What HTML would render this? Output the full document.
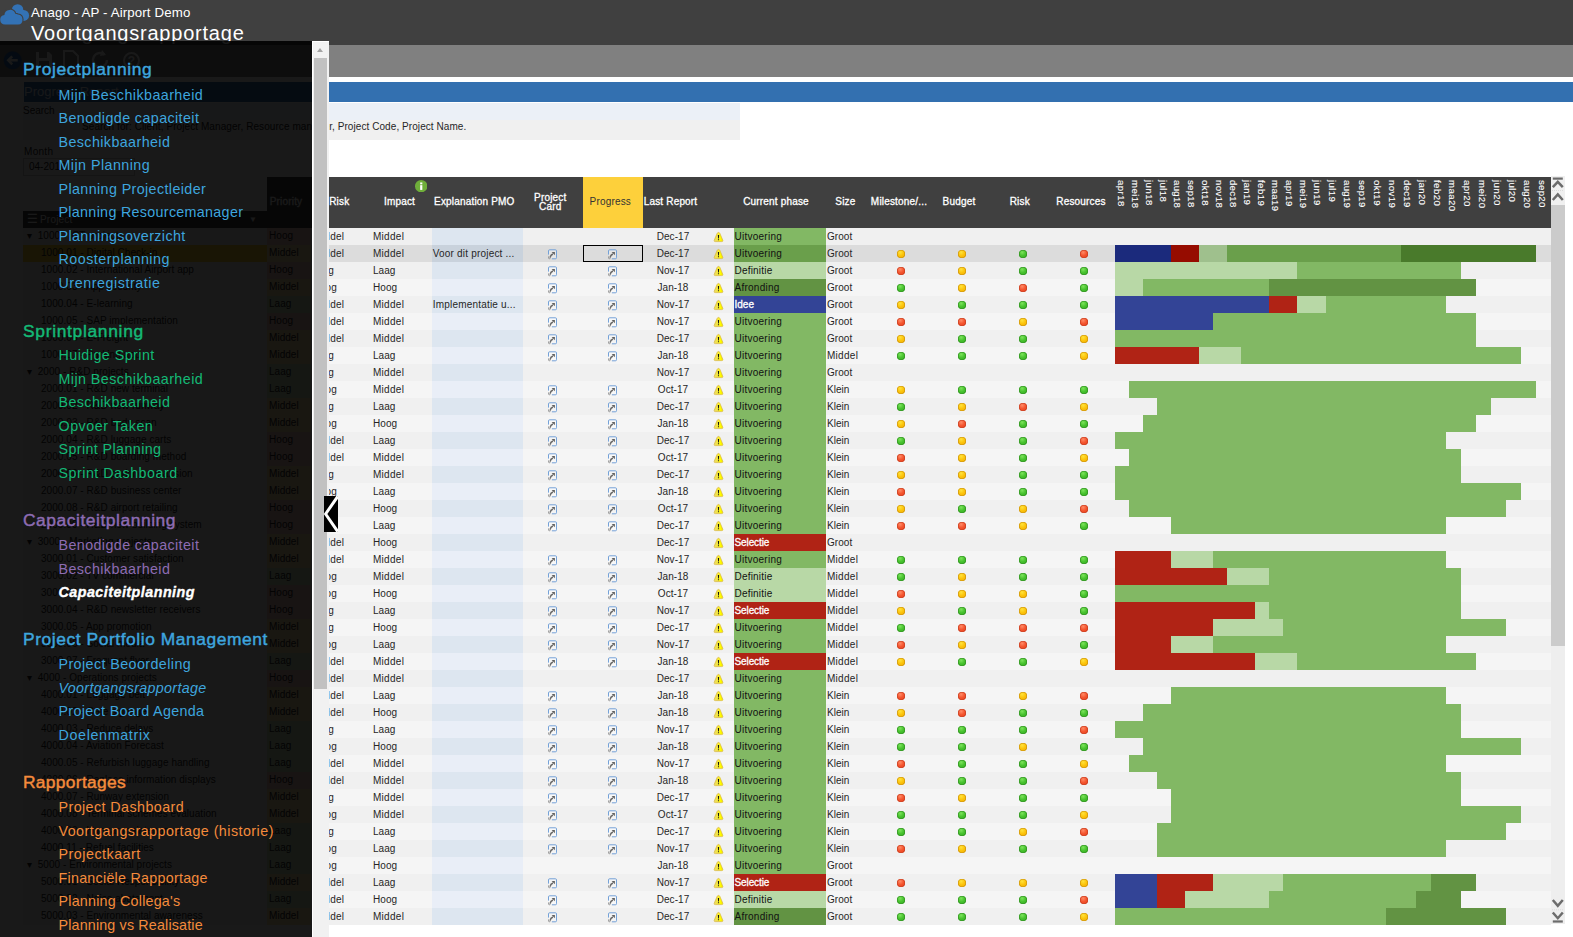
<!DOCTYPE html><html lang="nl"><head><meta charset="utf-8"><title>Voortgangsrapportage</title><style>
*{box-sizing:border-box;margin:0;padding:0}
svg{display:block}
html,body{width:1573px;height:937px;overflow:hidden;background:#fff}
body{font-family:"Liberation Sans", sans-serif;font-size:10px;color:#262626;position:relative}
.a{position:absolute}
#top{left:0;top:0;width:1573px;height:45px;background:#404040}
#t1{left:31px;top:4.6px;font-size:13.3px;color:#fff;white-space:nowrap;letter-spacing:.12px;line-height:16px}
#t2{left:31px;top:21px;font-size:20px;color:#fff;white-space:nowrap;letter-spacing:.78px;line-height:24px}
#tool{left:0;top:45px;width:1573px;height:32px;background:#808080}
#bluebar{left:24px;top:82px;width:1549px;height:20px;background:#3370b0}
#bluebar span{position:absolute;left:0;top:0;font-size:13px;line-height:20px;color:#e6eef7}
#srch1{left:23px;top:103px;width:717px;height:16.6px;background:#ebf0f7}
#srch2{left:23px;top:119.6px;width:717px;height:20.4px;background:#f0f0f0}
#srchlbl{left:23px;top:105px;line-height:12px}
#srchtxt{left:82px;top:120px;line-height:14px;white-space:nowrap;letter-spacing:.08px}
#srchtxt2{left:329.2px;top:120px;line-height:14px;white-space:nowrap;letter-spacing:.07px}
#monthlbl{left:24px;top:146px;line-height:12px;letter-spacing:.3px}
#monthinp{left:23px;top:158px;width:112px;height:18px;border:1px solid #ccc;background:#fff;line-height:15px;padding-left:5px}
#thead{left:267px;top:177px;width:1284px;height:51px;background:#404040}
#phead{left:23px;top:211px;width:244px;height:17px;background:#404040;color:#fff;line-height:17px}
.hl{position:absolute;color:#fff;font-size:10px;white-space:nowrap;transform:translateX(-50%);line-height:12px;top:196px;letter-spacing:.18px;-webkit-text-stroke:.3px #fff}
.mo{position:absolute;top:179.6px;font-size:9.6px;writing-mode:vertical-rl;color:#fff;white-space:nowrap;line-height:12px;letter-spacing:.25px;-webkit-text-stroke:.1px #fff}
.r{position:absolute;left:23px;width:1528px;height:17px;line-height:17px;white-space:nowrap}
.r.o{background:#f0f0f0}.r.e{background:#f5f5f5}.r.s{background:#dcdcdc}
.r>*{position:absolute;top:0;height:17px}
.c{letter-spacing:.05px}
.ex{left:409px;width:91px;padding-left:.7px;letter-spacing:.2px}
.o .ex{background:#dde6f0}.e .ex{background:#e9eef7}.s .ex{background:#c9d2dc}
.ph{left:711px;width:92px;padding-left:.5px}
.w{-webkit-text-stroke:.3px #fff}
.pn{left:0;width:244px;overflow:hidden;line-height:15px}
.pr{left:244px;width:44px;padding-left:2px;line-height:15px}
.lk{top:3.7px!important;width:10px;height:11px!important}
.lk svg{position:absolute;left:0;top:0}
.wn{left:690px;top:3.1px!important;width:11px;height:12px!important}
.d{top:4.6px!important;width:8.4px;height:8.4px!important;border-radius:50%}
.dY{background:radial-gradient(circle at 40% 30%,#ffe23a 0,#fcc40c 45%,#eea502 100%);box-shadow:inset 0 0 0 .6px #c98f05}
.dG{background:radial-gradient(circle at 40% 30%,#7be35a 0,#48c22f 45%,#2ea51d 100%);box-shadow:inset 0 0 0 .6px #2c8c1c}
.dR{background:radial-gradient(circle at 40% 30%,#ff8a66 0,#f4552f 45%,#e23a17 100%);box-shadow:inset 0 0 0 .6px #c23a1d}
.g{top:0}
#ovl{left:0;top:41px;width:312px;height:896px;background:rgba(0,0,0,.9)}
#sb{left:312px;top:41px;width:17px;height:896px;background:#f1f1f1;border-left:1.5px solid #fff;border-top:1px solid #fff}
#sbthumb{left:314px;top:58px;width:13px;height:631px;background:#c1c1c1}
#sbarrow{left:317px;top:48px;width:0;height:0;border-left:3.5px solid transparent;border-right:3.5px solid transparent;border-bottom:4px solid #a3a3a3}
.mh{position:absolute;left:23px;font-size:17.4px;white-space:nowrap;line-height:22px;-webkit-text-stroke:.45px currentColor}
.mi{position:absolute;left:58.5px;font-size:14.3px;white-space:nowrap;line-height:20px}
#clp{left:324px;top:496px;width:14px;height:36px;background:#000}
#rs{left:1551px;top:176px;width:14px;height:748px;background:#eee}
#rsthumb{left:1551px;top:205px;width:14px;height:441px;background:#cbcbcb}
#rstop{left:1551px;top:176px;width:14px;height:29px;background:#f0f0f0}
</style></head><body>
<div id="top" class="a"></div>
<svg class="a" style="left:0;top:0" width="31" height="27" viewBox="0 0 31 27"><g fill="#3372b5"><circle cx="17.6" cy="9.9" r="5.7"/><circle cx="23.6" cy="15.4" r="5.5"/><rect x="13" y="10" width="11" height="10"/></g><g fill="#3372b5" stroke="#404040" stroke-width="2.2"><path d="M5 24.6a4.8 4.8 0 0 1-.6-9.56 5.6 5.6 0 0 1 10.9-1.3 5.1 5.1 0 0 1 2.7 .76 5.1 5.1 0 0 1 .2 10.1z"/></g><path fill="#3372b5" d="M5 24.6a4.8 4.8 0 0 1-.6-9.56 5.6 5.6 0 0 1 10.9-1.3 5.1 5.1 0 0 1 2.7 .76 5.1 5.1 0 0 1 .2 10.1z"/></svg>
<div id="t1" class="a">Anago - AP - Airport Demo</div>
<div id="t2" class="a">Voortgangsrapportage</div>
<div id="tool" class="a"></div>
<svg class="a" style="left:3px;top:47px" width="150" height="28" viewBox="0 0 150 28"><circle cx="9.7" cy="13.3" r="9" fill="#2d6cb3"/><path d="M14.7 13.3H5.7m3.5-4-4 4 4 4" stroke="#fff" stroke-width="2.4" fill="none"/><path d="M33 5h13l3 3v14H33z" fill="#fff"/><rect x="36" y="5" width="8" height="6" fill="#808080"/><rect x="36" y="14" width="10" height="8" fill="#808080"/><path d="M61 4h9l5 5v14H61z" fill="none" stroke="#fff" stroke-width="2"/><path d="M104 13a7 7 0 1 1-2.5-5.4" fill="none" stroke="#fff" stroke-width="2.4"/><path d="M99 3l4 5-6 1z" fill="#fff"/><circle cx="128.5" cy="13.5" r="7.5" fill="none" stroke="#fff" stroke-width="2"/><text x="128.5" y="18" font-size="12" font-weight="bold" text-anchor="middle" fill="#fff">?</text></svg>
<div id="bluebar" class="a"><span>Progress Report</span></div>
<div id="srch1" class="a"></div><div id="srch2" class="a"></div>
<div id="srchlbl" class="a">Search</div>
<div id="srchtxt" class="a">Search for: Client, Project Manager, Resource manage</div><div id="srchtxt2" class="a">r, Project Code, Project Name.</div>
<div id="monthlbl" class="a">Month</div><div id="monthinp" class="a">04-2018</div>
<div id="thead" class="a"></div>
<div id="phead" class="a"><span style="position:absolute;left:4px;font-size:12px;line-height:16px">&#9776;</span><span style="position:absolute;left:17px;letter-spacing:.2px">Project</span><span style="position:absolute;left:226px;font-size:8px">&#9660;</span></div>
<div class="a" style="left:583px;top:177px;width:60px;height:51px;background:#fdd03b"></div>
<div class="hl" style="left:286px">Priority</div>
<div class="hl" style="left:339.3px">Risk</div>
<div class="hl" style="left:399.5px">Impact</div>
<div class="hl" style="left:474.3px">Explanation PMO</div>
<div class="hl" style="left:610.3px;color:#333;-webkit-text-stroke:0">Progress</div>
<div class="hl" style="left:670.5px">Last Report</div>
<div class="hl" style="left:776px">Current phase</div>
<div class="hl" style="left:845.4px">Size</div>
<div class="hl" style="left:899px">Milestone/...</div>
<div class="hl" style="left:959px">Budget</div>
<div class="hl" style="left:1019.8px">Risk</div>
<div class="hl" style="left:1081px">Resources</div>
<div class="hl" style="left:550.3px;top:193px;line-height:9px;text-align:center">Project<br>Card</div>
<svg class="a" style="left:415px;top:179.5px" width="12.4" height="12.4" viewBox="0 0 12 12"><circle cx="6" cy="6" r="6" fill="#6fae3a"/><rect x="5" y="5" width="2.1" height="4.6" fill="#fff"/><rect x="5" y="2.4" width="2.1" height="1.8" fill="#fff"/></svg>
<div class="mo" style="left:1114.5px;width:12px;letter-spacing:0.45px">apr18</div>
<div class="mo" style="left:1128.5px;width:12px;letter-spacing:0.46px">mei18</div>
<div class="mo" style="left:1142.5px;width:12px;letter-spacing:0.47px">jun18</div>
<div class="mo" style="left:1156.5px;width:12px;letter-spacing:0.41px">jul18</div>
<div class="mo" style="left:1170.5px;width:12px;letter-spacing:0.3px">aug18</div>
<div class="mo" style="left:1184.5px;width:12px;letter-spacing:0.28px">sep18</div>
<div class="mo" style="left:1198.5px;width:12px;letter-spacing:0.5px">okt18</div>
<div class="mo" style="left:1212.5px;width:12px;letter-spacing:0.42px">nov18</div>
<div class="mo" style="left:1226.5px;width:12px;letter-spacing:0.27px">dec18</div>
<div class="mo" style="left:1240.5px;width:12px;letter-spacing:0.36px">jan19</div>
<div class="mo" style="left:1254.5px;width:12px;letter-spacing:0.44px">feb19</div>
<div class="mo" style="left:1268.5px;width:12px;letter-spacing:0.41px">maa19</div>
<div class="mo" style="left:1282.5px;width:12px;letter-spacing:0.45px">apr19</div>
<div class="mo" style="left:1296.5px;width:12px;letter-spacing:0.46px">mei19</div>
<div class="mo" style="left:1311.0px;width:12px;letter-spacing:0.47px">jun19</div>
<div class="mo" style="left:1326.0px;width:12px;letter-spacing:0.41px">jul19</div>
<div class="mo" style="left:1341.0px;width:12px;letter-spacing:0.3px">aug19</div>
<div class="mo" style="left:1356.0px;width:12px;letter-spacing:0.28px">sep19</div>
<div class="mo" style="left:1371.0px;width:12px;letter-spacing:0.5px">okt19</div>
<div class="mo" style="left:1386.0px;width:12px;letter-spacing:0.42px">nov19</div>
<div class="mo" style="left:1401.0px;width:12px;letter-spacing:0.27px">dec19</div>
<div class="mo" style="left:1416.0px;width:12px;letter-spacing:0.36px">jan20</div>
<div class="mo" style="left:1431.0px;width:12px;letter-spacing:0.44px">feb20</div>
<div class="mo" style="left:1446.0px;width:12px;letter-spacing:0.41px">maa20</div>
<div class="mo" style="left:1461.0px;width:12px;letter-spacing:0.45px">apr20</div>
<div class="mo" style="left:1476.0px;width:12px;letter-spacing:0.46px">mei20</div>
<div class="mo" style="left:1491.0px;width:12px;letter-spacing:0.47px">jun20</div>
<div class="mo" style="left:1506.0px;width:12px;letter-spacing:0.41px">jul20</div>
<div class="mo" style="left:1521.0px;width:12px;letter-spacing:0.3px">aug20</div>
<div class="mo" style="left:1536.0px;width:12px;letter-spacing:0.28px">sep20</div>
<svg width="0" height="0" style="position:absolute"><linearGradient id="wg" x1="0" x2="1" y1="0" y2="0"><stop offset="0" stop-color="#e6d86a"/><stop offset=".45" stop-color="#f7e83a"/><stop offset=".7" stop-color="#ffff00"/><stop offset="1" stop-color="#f2e200"/></linearGradient></svg>
<div class="r o" style="top:228px">
<span class="pn c" style="padding-left:4px">&#9662;&nbsp; 1000 - ICT projects</span>
<span class="pr c" style="background:#f3c7c2">Hoog</span>
<span class="c" style="left:290.2px;letter-spacing:.28px">Middel</span>
<span class="c" style="left:350px;letter-spacing:.28px">Middel</span>
<span class="ex c"></span>
<span class="c" style="left:620px;width:60px;text-align:center">Dec-17</span>
<span class="wn"><svg width="11" height="12"><path d="M5.5 1.4C6.2 1.4 6.5 1.8 6.9 2.5L9.7 9C10.1 10 9.7 10.6 8.8 10.6H2.2C1.3 10.6 .9 10 1.3 9L4.1 2.5C4.5 1.8 4.8 1.4 5.5 1.4Z" fill="url(#wg)" stroke="#d8b541" stroke-width=".7"/><path d="M4.85 4h1.3l-.25 3.5h-.8z" fill="#10101c"/><rect x="4.9" y="8.1" width="1.2" height="1.2" rx=".4" fill="#3a3420"/></svg></span>
<span class="ph c" style="background:#82b864;color:#111;letter-spacing:0.25px">Uitvoering</span>
<span class="c" style="left:804px">Groot</span>
</div>
<div class="r s" style="top:245px">
<span class="pn c" style="background:#fdd03b;padding-left:18px">1000.01 - Digital Check-in</span>
<span class="pr c" style="background:#fbe3b0">Middel</span>
<span class="c" style="left:290.2px;letter-spacing:.28px">Middel</span>
<span class="c" style="left:350px;letter-spacing:.28px">Middel</span>
<span class="ex c">Voor dit project ...</span>
<span class="lk" style="left:525px"><svg width="10" height="11"><path d="M.5 5.6V1.9A1.1 1.1 0 0 1 1.6.8H7.4A1.1 1.1 0 0 1 8.5 1.9V8.7A1.1 1.1 0 0 1 7.4 9.8H3.9" fill="rgba(255,255,255,.3)" stroke="#6e9dd6" stroke-width=".95"/><path d="M2.1 8.6C2.3 6.7 3.3 5.6 5 5" stroke="#6a6a6a" stroke-width="1.4" fill="none"/><path d="M3.6 2.9h3.3v3.3z" fill="#606060"/><path d="M.5 7.4v1.7c0 .9 1.8 .9 1.8 0V8.3" stroke="#8e8e8e" stroke-width=".8" fill="none"/></svg></span><span class="lk" style="left:585px"><svg width="10" height="11"><path d="M.5 5.6V1.9A1.1 1.1 0 0 1 1.6.8H7.4A1.1 1.1 0 0 1 8.5 1.9V8.7A1.1 1.1 0 0 1 7.4 9.8H3.9" fill="rgba(255,255,255,.3)" stroke="#6e9dd6" stroke-width=".95"/><path d="M2.1 8.6C2.3 6.7 3.3 5.6 5 5" stroke="#6a6a6a" stroke-width="1.4" fill="none"/><path d="M3.6 2.9h3.3v3.3z" fill="#606060"/><path d="M.5 7.4v1.7c0 .9 1.8 .9 1.8 0V8.3" stroke="#8e8e8e" stroke-width=".8" fill="none"/></svg></span>
<span style="left:560px;width:60px;border:1px solid #000"></span>
<span class="c" style="left:620px;width:60px;text-align:center">Dec-17</span>
<span class="wn"><svg width="11" height="12"><path d="M5.5 1.4C6.2 1.4 6.5 1.8 6.9 2.5L9.7 9C10.1 10 9.7 10.6 8.8 10.6H2.2C1.3 10.6 .9 10 1.3 9L4.1 2.5C4.5 1.8 4.8 1.4 5.5 1.4Z" fill="url(#wg)" stroke="#d8b541" stroke-width=".7"/><path d="M4.85 4h1.3l-.25 3.5h-.8z" fill="#10101c"/><rect x="4.9" y="8.1" width="1.2" height="1.2" rx=".4" fill="#3a3420"/></svg></span>
<span class="ph c" style="background:#6a9f4b;color:#111;letter-spacing:0.25px">Uitvoering</span>
<span class="c" style="left:804px">Groot</span>
<span class="d dY" style="left:873.8px"></span>
<span class="d dY" style="left:934.8px"></span>
<span class="d dG" style="left:995.8px"></span>
<span class="d dR" style="left:1056.8px"></span>
<span class="g" style="left:1092px;width:56px;background:#1b2a7c"></span>
<span class="g" style="left:1148px;width:28px;background:#960c00"></span>
<span class="g" style="left:1176px;width:28px;background:#9fc08d"></span>
<span class="g" style="left:1204px;width:174px;background:#6a9f4b"></span>
<span class="g" style="left:1378px;width:135px;background:#497a2b"></span>
</div>
<div class="r o" style="top:262px">
<span class="pn c" style="padding-left:18px">1000.02 - International Airport app</span>
<span class="pr c" style="background:#f3c7c2">Hoog</span>
<span class="c" style="left:288.4px">Laag</span>
<span class="c" style="left:350px">Laag</span>
<span class="ex c"></span>
<span class="lk" style="left:525px"><svg width="10" height="11"><path d="M.5 5.6V1.9A1.1 1.1 0 0 1 1.6.8H7.4A1.1 1.1 0 0 1 8.5 1.9V8.7A1.1 1.1 0 0 1 7.4 9.8H3.9" fill="rgba(255,255,255,.3)" stroke="#6e9dd6" stroke-width=".95"/><path d="M2.1 8.6C2.3 6.7 3.3 5.6 5 5" stroke="#6a6a6a" stroke-width="1.4" fill="none"/><path d="M3.6 2.9h3.3v3.3z" fill="#606060"/><path d="M.5 7.4v1.7c0 .9 1.8 .9 1.8 0V8.3" stroke="#8e8e8e" stroke-width=".8" fill="none"/></svg></span><span class="lk" style="left:585px"><svg width="10" height="11"><path d="M.5 5.6V1.9A1.1 1.1 0 0 1 1.6.8H7.4A1.1 1.1 0 0 1 8.5 1.9V8.7A1.1 1.1 0 0 1 7.4 9.8H3.9" fill="rgba(255,255,255,.3)" stroke="#6e9dd6" stroke-width=".95"/><path d="M2.1 8.6C2.3 6.7 3.3 5.6 5 5" stroke="#6a6a6a" stroke-width="1.4" fill="none"/><path d="M3.6 2.9h3.3v3.3z" fill="#606060"/><path d="M.5 7.4v1.7c0 .9 1.8 .9 1.8 0V8.3" stroke="#8e8e8e" stroke-width=".8" fill="none"/></svg></span>
<span class="c" style="left:620px;width:60px;text-align:center">Nov-17</span>
<span class="wn"><svg width="11" height="12"><path d="M5.5 1.4C6.2 1.4 6.5 1.8 6.9 2.5L9.7 9C10.1 10 9.7 10.6 8.8 10.6H2.2C1.3 10.6 .9 10 1.3 9L4.1 2.5C4.5 1.8 4.8 1.4 5.5 1.4Z" fill="url(#wg)" stroke="#d8b541" stroke-width=".7"/><path d="M4.85 4h1.3l-.25 3.5h-.8z" fill="#10101c"/><rect x="4.9" y="8.1" width="1.2" height="1.2" rx=".4" fill="#3a3420"/></svg></span>
<span class="ph c" style="background:#b8d8a6;color:#111;letter-spacing:0.2px">Definitie</span>
<span class="c" style="left:804px">Groot</span>
<span class="d dR" style="left:873.8px"></span>
<span class="d dY" style="left:934.8px"></span>
<span class="d dG" style="left:995.8px"></span>
<span class="d dG" style="left:1056.8px"></span>
<span class="g" style="left:1092px;width:182px;background:#b8d8a6"></span>
<span class="g" style="left:1274px;width:164px;background:#82b864"></span>
</div>
<div class="r e" style="top:279px">
<span class="pn c" style="padding-left:18px">1000.03 - App security</span>
<span class="pr c" style="background:#fbe3b0">Middel</span>
<span class="c" style="left:289.7px">Hoog</span>
<span class="c" style="left:350px">Hoog</span>
<span class="ex c"></span>
<span class="lk" style="left:525px"><svg width="10" height="11"><path d="M.5 5.6V1.9A1.1 1.1 0 0 1 1.6.8H7.4A1.1 1.1 0 0 1 8.5 1.9V8.7A1.1 1.1 0 0 1 7.4 9.8H3.9" fill="rgba(255,255,255,.3)" stroke="#6e9dd6" stroke-width=".95"/><path d="M2.1 8.6C2.3 6.7 3.3 5.6 5 5" stroke="#6a6a6a" stroke-width="1.4" fill="none"/><path d="M3.6 2.9h3.3v3.3z" fill="#606060"/><path d="M.5 7.4v1.7c0 .9 1.8 .9 1.8 0V8.3" stroke="#8e8e8e" stroke-width=".8" fill="none"/></svg></span><span class="lk" style="left:585px"><svg width="10" height="11"><path d="M.5 5.6V1.9A1.1 1.1 0 0 1 1.6.8H7.4A1.1 1.1 0 0 1 8.5 1.9V8.7A1.1 1.1 0 0 1 7.4 9.8H3.9" fill="rgba(255,255,255,.3)" stroke="#6e9dd6" stroke-width=".95"/><path d="M2.1 8.6C2.3 6.7 3.3 5.6 5 5" stroke="#6a6a6a" stroke-width="1.4" fill="none"/><path d="M3.6 2.9h3.3v3.3z" fill="#606060"/><path d="M.5 7.4v1.7c0 .9 1.8 .9 1.8 0V8.3" stroke="#8e8e8e" stroke-width=".8" fill="none"/></svg></span>
<span class="c" style="left:620px;width:60px;text-align:center">Jan-18</span>
<span class="wn"><svg width="11" height="12"><path d="M5.5 1.4C6.2 1.4 6.5 1.8 6.9 2.5L9.7 9C10.1 10 9.7 10.6 8.8 10.6H2.2C1.3 10.6 .9 10 1.3 9L4.1 2.5C4.5 1.8 4.8 1.4 5.5 1.4Z" fill="url(#wg)" stroke="#d8b541" stroke-width=".7"/><path d="M4.85 4h1.3l-.25 3.5h-.8z" fill="#10101c"/><rect x="4.9" y="8.1" width="1.2" height="1.2" rx=".4" fill="#3a3420"/></svg></span>
<span class="ph c" style="background:#629343;color:#111;letter-spacing:0.25px">Afronding</span>
<span class="c" style="left:804px">Groot</span>
<span class="d dG" style="left:873.8px"></span>
<span class="d dY" style="left:934.8px"></span>
<span class="d dR" style="left:995.8px"></span>
<span class="d dG" style="left:1056.8px"></span>
<span class="g" style="left:1092px;width:28px;background:#b8d8a6"></span>
<span class="g" style="left:1120px;width:126px;background:#82b864"></span>
<span class="g" style="left:1246px;width:207px;background:#629343"></span>
</div>
<div class="r o" style="top:296px">
<span class="pn c" style="padding-left:18px">1000.04 - E-learning</span>
<span class="pr c" style="background:#cfe6c4">Laag</span>
<span class="c" style="left:290.2px;letter-spacing:.28px">Middel</span>
<span class="c" style="left:350px;letter-spacing:.28px">Middel</span>
<span class="ex c">Implementatie u...</span>
<span class="lk" style="left:525px"><svg width="10" height="11"><path d="M.5 5.6V1.9A1.1 1.1 0 0 1 1.6.8H7.4A1.1 1.1 0 0 1 8.5 1.9V8.7A1.1 1.1 0 0 1 7.4 9.8H3.9" fill="rgba(255,255,255,.3)" stroke="#6e9dd6" stroke-width=".95"/><path d="M2.1 8.6C2.3 6.7 3.3 5.6 5 5" stroke="#6a6a6a" stroke-width="1.4" fill="none"/><path d="M3.6 2.9h3.3v3.3z" fill="#606060"/><path d="M.5 7.4v1.7c0 .9 1.8 .9 1.8 0V8.3" stroke="#8e8e8e" stroke-width=".8" fill="none"/></svg></span><span class="lk" style="left:585px"><svg width="10" height="11"><path d="M.5 5.6V1.9A1.1 1.1 0 0 1 1.6.8H7.4A1.1 1.1 0 0 1 8.5 1.9V8.7A1.1 1.1 0 0 1 7.4 9.8H3.9" fill="rgba(255,255,255,.3)" stroke="#6e9dd6" stroke-width=".95"/><path d="M2.1 8.6C2.3 6.7 3.3 5.6 5 5" stroke="#6a6a6a" stroke-width="1.4" fill="none"/><path d="M3.6 2.9h3.3v3.3z" fill="#606060"/><path d="M.5 7.4v1.7c0 .9 1.8 .9 1.8 0V8.3" stroke="#8e8e8e" stroke-width=".8" fill="none"/></svg></span>
<span class="c" style="left:620px;width:60px;text-align:center">Nov-17</span>
<span class="wn"><svg width="11" height="12"><path d="M5.5 1.4C6.2 1.4 6.5 1.8 6.9 2.5L9.7 9C10.1 10 9.7 10.6 8.8 10.6H2.2C1.3 10.6 .9 10 1.3 9L4.1 2.5C4.5 1.8 4.8 1.4 5.5 1.4Z" fill="url(#wg)" stroke="#d8b541" stroke-width=".7"/><path d="M4.85 4h1.3l-.25 3.5h-.8z" fill="#10101c"/><rect x="4.9" y="8.1" width="1.2" height="1.2" rx=".4" fill="#3a3420"/></svg></span>
<span class="ph c w" style="background:#334496;color:#fff;letter-spacing:0px">Idee</span>
<span class="c" style="left:804px">Groot</span>
<span class="d dY" style="left:873.8px"></span>
<span class="d dG" style="left:934.8px"></span>
<span class="d dG" style="left:995.8px"></span>
<span class="d dG" style="left:1056.8px"></span>
<span class="g" style="left:1092px;width:154px;background:#334496"></span>
<span class="g" style="left:1246px;width:28px;background:#b02315"></span>
<span class="g" style="left:1274px;width:29px;background:#b8d8a6"></span>
<span class="g" style="left:1303px;width:120px;background:#82b864"></span>
</div>
<div class="r e" style="top:313px">
<span class="pn c" style="padding-left:18px">1000.05 - SAP implementation</span>
<span class="pr c" style="background:#f3c7c2">Hoog</span>
<span class="c" style="left:290.2px;letter-spacing:.28px">Middel</span>
<span class="c" style="left:350px;letter-spacing:.28px">Middel</span>
<span class="ex c"></span>
<span class="lk" style="left:525px"><svg width="10" height="11"><path d="M.5 5.6V1.9A1.1 1.1 0 0 1 1.6.8H7.4A1.1 1.1 0 0 1 8.5 1.9V8.7A1.1 1.1 0 0 1 7.4 9.8H3.9" fill="rgba(255,255,255,.3)" stroke="#6e9dd6" stroke-width=".95"/><path d="M2.1 8.6C2.3 6.7 3.3 5.6 5 5" stroke="#6a6a6a" stroke-width="1.4" fill="none"/><path d="M3.6 2.9h3.3v3.3z" fill="#606060"/><path d="M.5 7.4v1.7c0 .9 1.8 .9 1.8 0V8.3" stroke="#8e8e8e" stroke-width=".8" fill="none"/></svg></span><span class="lk" style="left:585px"><svg width="10" height="11"><path d="M.5 5.6V1.9A1.1 1.1 0 0 1 1.6.8H7.4A1.1 1.1 0 0 1 8.5 1.9V8.7A1.1 1.1 0 0 1 7.4 9.8H3.9" fill="rgba(255,255,255,.3)" stroke="#6e9dd6" stroke-width=".95"/><path d="M2.1 8.6C2.3 6.7 3.3 5.6 5 5" stroke="#6a6a6a" stroke-width="1.4" fill="none"/><path d="M3.6 2.9h3.3v3.3z" fill="#606060"/><path d="M.5 7.4v1.7c0 .9 1.8 .9 1.8 0V8.3" stroke="#8e8e8e" stroke-width=".8" fill="none"/></svg></span>
<span class="c" style="left:620px;width:60px;text-align:center">Nov-17</span>
<span class="wn"><svg width="11" height="12"><path d="M5.5 1.4C6.2 1.4 6.5 1.8 6.9 2.5L9.7 9C10.1 10 9.7 10.6 8.8 10.6H2.2C1.3 10.6 .9 10 1.3 9L4.1 2.5C4.5 1.8 4.8 1.4 5.5 1.4Z" fill="url(#wg)" stroke="#d8b541" stroke-width=".7"/><path d="M4.85 4h1.3l-.25 3.5h-.8z" fill="#10101c"/><rect x="4.9" y="8.1" width="1.2" height="1.2" rx=".4" fill="#3a3420"/></svg></span>
<span class="ph c" style="background:#82b864;color:#111;letter-spacing:0.25px">Uitvoering</span>
<span class="c" style="left:804px">Groot</span>
<span class="d dR" style="left:873.8px"></span>
<span class="d dR" style="left:934.8px"></span>
<span class="d dY" style="left:995.8px"></span>
<span class="d dR" style="left:1056.8px"></span>
<span class="g" style="left:1092px;width:98px;background:#334496"></span>
<span class="g" style="left:1190px;width:263px;background:#82b864"></span>
</div>
<div class="r o" style="top:330px">
<span class="pn c" style="padding-left:18px">1000.06 - E-Freight</span>
<span class="pr c" style="background:#fbe3b0">Middel</span>
<span class="c" style="left:290.2px;letter-spacing:.28px">Middel</span>
<span class="c" style="left:350px;letter-spacing:.28px">Middel</span>
<span class="ex c"></span>
<span class="lk" style="left:525px"><svg width="10" height="11"><path d="M.5 5.6V1.9A1.1 1.1 0 0 1 1.6.8H7.4A1.1 1.1 0 0 1 8.5 1.9V8.7A1.1 1.1 0 0 1 7.4 9.8H3.9" fill="rgba(255,255,255,.3)" stroke="#6e9dd6" stroke-width=".95"/><path d="M2.1 8.6C2.3 6.7 3.3 5.6 5 5" stroke="#6a6a6a" stroke-width="1.4" fill="none"/><path d="M3.6 2.9h3.3v3.3z" fill="#606060"/><path d="M.5 7.4v1.7c0 .9 1.8 .9 1.8 0V8.3" stroke="#8e8e8e" stroke-width=".8" fill="none"/></svg></span><span class="lk" style="left:585px"><svg width="10" height="11"><path d="M.5 5.6V1.9A1.1 1.1 0 0 1 1.6.8H7.4A1.1 1.1 0 0 1 8.5 1.9V8.7A1.1 1.1 0 0 1 7.4 9.8H3.9" fill="rgba(255,255,255,.3)" stroke="#6e9dd6" stroke-width=".95"/><path d="M2.1 8.6C2.3 6.7 3.3 5.6 5 5" stroke="#6a6a6a" stroke-width="1.4" fill="none"/><path d="M3.6 2.9h3.3v3.3z" fill="#606060"/><path d="M.5 7.4v1.7c0 .9 1.8 .9 1.8 0V8.3" stroke="#8e8e8e" stroke-width=".8" fill="none"/></svg></span>
<span class="c" style="left:620px;width:60px;text-align:center">Dec-17</span>
<span class="wn"><svg width="11" height="12"><path d="M5.5 1.4C6.2 1.4 6.5 1.8 6.9 2.5L9.7 9C10.1 10 9.7 10.6 8.8 10.6H2.2C1.3 10.6 .9 10 1.3 9L4.1 2.5C4.5 1.8 4.8 1.4 5.5 1.4Z" fill="url(#wg)" stroke="#d8b541" stroke-width=".7"/><path d="M4.85 4h1.3l-.25 3.5h-.8z" fill="#10101c"/><rect x="4.9" y="8.1" width="1.2" height="1.2" rx=".4" fill="#3a3420"/></svg></span>
<span class="ph c" style="background:#82b864;color:#111;letter-spacing:0.25px">Uitvoering</span>
<span class="c" style="left:804px">Groot</span>
<span class="d dY" style="left:873.8px"></span>
<span class="d dG" style="left:934.8px"></span>
<span class="d dG" style="left:995.8px"></span>
<span class="d dY" style="left:1056.8px"></span>
<span class="g" style="left:1092px;width:361px;background:#82b864"></span>
</div>
<div class="r e" style="top:347px">
<span class="pn c" style="padding-left:18px">1000.07 - Parking app</span>
<span class="pr c" style="background:#fbe3b0">Middel</span>
<span class="c" style="left:288.4px">Laag</span>
<span class="c" style="left:350px">Laag</span>
<span class="ex c"></span>
<span class="lk" style="left:525px"><svg width="10" height="11"><path d="M.5 5.6V1.9A1.1 1.1 0 0 1 1.6.8H7.4A1.1 1.1 0 0 1 8.5 1.9V8.7A1.1 1.1 0 0 1 7.4 9.8H3.9" fill="rgba(255,255,255,.3)" stroke="#6e9dd6" stroke-width=".95"/><path d="M2.1 8.6C2.3 6.7 3.3 5.6 5 5" stroke="#6a6a6a" stroke-width="1.4" fill="none"/><path d="M3.6 2.9h3.3v3.3z" fill="#606060"/><path d="M.5 7.4v1.7c0 .9 1.8 .9 1.8 0V8.3" stroke="#8e8e8e" stroke-width=".8" fill="none"/></svg></span><span class="lk" style="left:585px"><svg width="10" height="11"><path d="M.5 5.6V1.9A1.1 1.1 0 0 1 1.6.8H7.4A1.1 1.1 0 0 1 8.5 1.9V8.7A1.1 1.1 0 0 1 7.4 9.8H3.9" fill="rgba(255,255,255,.3)" stroke="#6e9dd6" stroke-width=".95"/><path d="M2.1 8.6C2.3 6.7 3.3 5.6 5 5" stroke="#6a6a6a" stroke-width="1.4" fill="none"/><path d="M3.6 2.9h3.3v3.3z" fill="#606060"/><path d="M.5 7.4v1.7c0 .9 1.8 .9 1.8 0V8.3" stroke="#8e8e8e" stroke-width=".8" fill="none"/></svg></span>
<span class="c" style="left:620px;width:60px;text-align:center">Jan-18</span>
<span class="wn"><svg width="11" height="12"><path d="M5.5 1.4C6.2 1.4 6.5 1.8 6.9 2.5L9.7 9C10.1 10 9.7 10.6 8.8 10.6H2.2C1.3 10.6 .9 10 1.3 9L4.1 2.5C4.5 1.8 4.8 1.4 5.5 1.4Z" fill="url(#wg)" stroke="#d8b541" stroke-width=".7"/><path d="M4.85 4h1.3l-.25 3.5h-.8z" fill="#10101c"/><rect x="4.9" y="8.1" width="1.2" height="1.2" rx=".4" fill="#3a3420"/></svg></span>
<span class="ph c" style="background:#82b864;color:#111;letter-spacing:0.25px">Uitvoering</span>
<span class="c" style="left:804px;letter-spacing:.28px">Middel</span>
<span class="d dG" style="left:873.8px"></span>
<span class="d dG" style="left:934.8px"></span>
<span class="d dG" style="left:995.8px"></span>
<span class="d dY" style="left:1056.8px"></span>
<span class="g" style="left:1092px;width:84px;background:#b02315"></span>
<span class="g" style="left:1176px;width:42px;background:#b8d8a6"></span>
<span class="g" style="left:1218px;width:280px;background:#82b864"></span>
</div>
<div class="r o" style="top:364px">
<span class="pn c" style="padding-left:4px">&#9662;&nbsp; 2000 - R&amp;D projects</span>
<span class="pr c" style="background:#cfe6c4">Laag</span>
<span class="c" style="left:288.4px">Laag</span>
<span class="c" style="left:350px;letter-spacing:.28px">Middel</span>
<span class="ex c"></span>
<span class="c" style="left:620px;width:60px;text-align:center">Nov-17</span>
<span class="wn"><svg width="11" height="12"><path d="M5.5 1.4C6.2 1.4 6.5 1.8 6.9 2.5L9.7 9C10.1 10 9.7 10.6 8.8 10.6H2.2C1.3 10.6 .9 10 1.3 9L4.1 2.5C4.5 1.8 4.8 1.4 5.5 1.4Z" fill="url(#wg)" stroke="#d8b541" stroke-width=".7"/><path d="M4.85 4h1.3l-.25 3.5h-.8z" fill="#10101c"/><rect x="4.9" y="8.1" width="1.2" height="1.2" rx=".4" fill="#3a3420"/></svg></span>
<span class="ph c" style="background:#82b864;color:#111;letter-spacing:0.25px">Uitvoering</span>
<span class="c" style="left:804px">Groot</span>
</div>
<div class="r e" style="top:381px">
<span class="pn c" style="padding-left:18px">2000.01 - R&amp;D new terminal</span>
<span class="pr c" style="background:#cfe6c4">Laag</span>
<span class="c" style="left:289.7px">Hoog</span>
<span class="c" style="left:350px;letter-spacing:.28px">Middel</span>
<span class="ex c"></span>
<span class="lk" style="left:525px"><svg width="10" height="11"><path d="M.5 5.6V1.9A1.1 1.1 0 0 1 1.6.8H7.4A1.1 1.1 0 0 1 8.5 1.9V8.7A1.1 1.1 0 0 1 7.4 9.8H3.9" fill="rgba(255,255,255,.3)" stroke="#6e9dd6" stroke-width=".95"/><path d="M2.1 8.6C2.3 6.7 3.3 5.6 5 5" stroke="#6a6a6a" stroke-width="1.4" fill="none"/><path d="M3.6 2.9h3.3v3.3z" fill="#606060"/><path d="M.5 7.4v1.7c0 .9 1.8 .9 1.8 0V8.3" stroke="#8e8e8e" stroke-width=".8" fill="none"/></svg></span><span class="lk" style="left:585px"><svg width="10" height="11"><path d="M.5 5.6V1.9A1.1 1.1 0 0 1 1.6.8H7.4A1.1 1.1 0 0 1 8.5 1.9V8.7A1.1 1.1 0 0 1 7.4 9.8H3.9" fill="rgba(255,255,255,.3)" stroke="#6e9dd6" stroke-width=".95"/><path d="M2.1 8.6C2.3 6.7 3.3 5.6 5 5" stroke="#6a6a6a" stroke-width="1.4" fill="none"/><path d="M3.6 2.9h3.3v3.3z" fill="#606060"/><path d="M.5 7.4v1.7c0 .9 1.8 .9 1.8 0V8.3" stroke="#8e8e8e" stroke-width=".8" fill="none"/></svg></span>
<span class="c" style="left:620px;width:60px;text-align:center">Oct-17</span>
<span class="wn"><svg width="11" height="12"><path d="M5.5 1.4C6.2 1.4 6.5 1.8 6.9 2.5L9.7 9C10.1 10 9.7 10.6 8.8 10.6H2.2C1.3 10.6 .9 10 1.3 9L4.1 2.5C4.5 1.8 4.8 1.4 5.5 1.4Z" fill="url(#wg)" stroke="#d8b541" stroke-width=".7"/><path d="M4.85 4h1.3l-.25 3.5h-.8z" fill="#10101c"/><rect x="4.9" y="8.1" width="1.2" height="1.2" rx=".4" fill="#3a3420"/></svg></span>
<span class="ph c" style="background:#82b864;color:#111;letter-spacing:0.25px">Uitvoering</span>
<span class="c" style="left:804px">Klein</span>
<span class="d dY" style="left:873.8px"></span>
<span class="d dG" style="left:934.8px"></span>
<span class="d dG" style="left:995.8px"></span>
<span class="d dG" style="left:1056.8px"></span>
<span class="g" style="left:1106px;width:407px;background:#82b864"></span>
</div>
<div class="r o" style="top:398px">
<span class="pn c" style="padding-left:18px">2000.02 - R&amp;D new runway</span>
<span class="pr c" style="background:#fbe3b0">Middel</span>
<span class="c" style="left:288.4px">Laag</span>
<span class="c" style="left:350px">Laag</span>
<span class="ex c"></span>
<span class="lk" style="left:525px"><svg width="10" height="11"><path d="M.5 5.6V1.9A1.1 1.1 0 0 1 1.6.8H7.4A1.1 1.1 0 0 1 8.5 1.9V8.7A1.1 1.1 0 0 1 7.4 9.8H3.9" fill="rgba(255,255,255,.3)" stroke="#6e9dd6" stroke-width=".95"/><path d="M2.1 8.6C2.3 6.7 3.3 5.6 5 5" stroke="#6a6a6a" stroke-width="1.4" fill="none"/><path d="M3.6 2.9h3.3v3.3z" fill="#606060"/><path d="M.5 7.4v1.7c0 .9 1.8 .9 1.8 0V8.3" stroke="#8e8e8e" stroke-width=".8" fill="none"/></svg></span><span class="lk" style="left:585px"><svg width="10" height="11"><path d="M.5 5.6V1.9A1.1 1.1 0 0 1 1.6.8H7.4A1.1 1.1 0 0 1 8.5 1.9V8.7A1.1 1.1 0 0 1 7.4 9.8H3.9" fill="rgba(255,255,255,.3)" stroke="#6e9dd6" stroke-width=".95"/><path d="M2.1 8.6C2.3 6.7 3.3 5.6 5 5" stroke="#6a6a6a" stroke-width="1.4" fill="none"/><path d="M3.6 2.9h3.3v3.3z" fill="#606060"/><path d="M.5 7.4v1.7c0 .9 1.8 .9 1.8 0V8.3" stroke="#8e8e8e" stroke-width=".8" fill="none"/></svg></span>
<span class="c" style="left:620px;width:60px;text-align:center">Dec-17</span>
<span class="wn"><svg width="11" height="12"><path d="M5.5 1.4C6.2 1.4 6.5 1.8 6.9 2.5L9.7 9C10.1 10 9.7 10.6 8.8 10.6H2.2C1.3 10.6 .9 10 1.3 9L4.1 2.5C4.5 1.8 4.8 1.4 5.5 1.4Z" fill="url(#wg)" stroke="#d8b541" stroke-width=".7"/><path d="M4.85 4h1.3l-.25 3.5h-.8z" fill="#10101c"/><rect x="4.9" y="8.1" width="1.2" height="1.2" rx=".4" fill="#3a3420"/></svg></span>
<span class="ph c" style="background:#82b864;color:#111;letter-spacing:0.25px">Uitvoering</span>
<span class="c" style="left:804px">Klein</span>
<span class="d dG" style="left:873.8px"></span>
<span class="d dY" style="left:934.8px"></span>
<span class="d dR" style="left:995.8px"></span>
<span class="d dY" style="left:1056.8px"></span>
<span class="g" style="left:1134px;width:334px;background:#82b864"></span>
</div>
<div class="r e" style="top:415px">
<span class="pn c" style="padding-left:18px">2000.03 - R&amp;D body scan</span>
<span class="pr c" style="background:#fbe3b0">Middel</span>
<span class="c" style="left:289.7px">Hoog</span>
<span class="c" style="left:350px">Hoog</span>
<span class="ex c"></span>
<span class="lk" style="left:525px"><svg width="10" height="11"><path d="M.5 5.6V1.9A1.1 1.1 0 0 1 1.6.8H7.4A1.1 1.1 0 0 1 8.5 1.9V8.7A1.1 1.1 0 0 1 7.4 9.8H3.9" fill="rgba(255,255,255,.3)" stroke="#6e9dd6" stroke-width=".95"/><path d="M2.1 8.6C2.3 6.7 3.3 5.6 5 5" stroke="#6a6a6a" stroke-width="1.4" fill="none"/><path d="M3.6 2.9h3.3v3.3z" fill="#606060"/><path d="M.5 7.4v1.7c0 .9 1.8 .9 1.8 0V8.3" stroke="#8e8e8e" stroke-width=".8" fill="none"/></svg></span><span class="lk" style="left:585px"><svg width="10" height="11"><path d="M.5 5.6V1.9A1.1 1.1 0 0 1 1.6.8H7.4A1.1 1.1 0 0 1 8.5 1.9V8.7A1.1 1.1 0 0 1 7.4 9.8H3.9" fill="rgba(255,255,255,.3)" stroke="#6e9dd6" stroke-width=".95"/><path d="M2.1 8.6C2.3 6.7 3.3 5.6 5 5" stroke="#6a6a6a" stroke-width="1.4" fill="none"/><path d="M3.6 2.9h3.3v3.3z" fill="#606060"/><path d="M.5 7.4v1.7c0 .9 1.8 .9 1.8 0V8.3" stroke="#8e8e8e" stroke-width=".8" fill="none"/></svg></span>
<span class="c" style="left:620px;width:60px;text-align:center">Jan-18</span>
<span class="wn"><svg width="11" height="12"><path d="M5.5 1.4C6.2 1.4 6.5 1.8 6.9 2.5L9.7 9C10.1 10 9.7 10.6 8.8 10.6H2.2C1.3 10.6 .9 10 1.3 9L4.1 2.5C4.5 1.8 4.8 1.4 5.5 1.4Z" fill="url(#wg)" stroke="#d8b541" stroke-width=".7"/><path d="M4.85 4h1.3l-.25 3.5h-.8z" fill="#10101c"/><rect x="4.9" y="8.1" width="1.2" height="1.2" rx=".4" fill="#3a3420"/></svg></span>
<span class="ph c" style="background:#82b864;color:#111;letter-spacing:0.25px">Uitvoering</span>
<span class="c" style="left:804px">Klein</span>
<span class="d dY" style="left:873.8px"></span>
<span class="d dR" style="left:934.8px"></span>
<span class="d dG" style="left:995.8px"></span>
<span class="d dG" style="left:1056.8px"></span>
<span class="g" style="left:1120px;width:333px;background:#82b864"></span>
</div>
<div class="r o" style="top:432px">
<span class="pn c" style="padding-left:18px">2000.04 - R&amp;D luggage carts</span>
<span class="pr c" style="background:#f3c7c2">Hoog</span>
<span class="c" style="left:290.2px;letter-spacing:.28px">Middel</span>
<span class="c" style="left:350px">Laag</span>
<span class="ex c"></span>
<span class="lk" style="left:525px"><svg width="10" height="11"><path d="M.5 5.6V1.9A1.1 1.1 0 0 1 1.6.8H7.4A1.1 1.1 0 0 1 8.5 1.9V8.7A1.1 1.1 0 0 1 7.4 9.8H3.9" fill="rgba(255,255,255,.3)" stroke="#6e9dd6" stroke-width=".95"/><path d="M2.1 8.6C2.3 6.7 3.3 5.6 5 5" stroke="#6a6a6a" stroke-width="1.4" fill="none"/><path d="M3.6 2.9h3.3v3.3z" fill="#606060"/><path d="M.5 7.4v1.7c0 .9 1.8 .9 1.8 0V8.3" stroke="#8e8e8e" stroke-width=".8" fill="none"/></svg></span><span class="lk" style="left:585px"><svg width="10" height="11"><path d="M.5 5.6V1.9A1.1 1.1 0 0 1 1.6.8H7.4A1.1 1.1 0 0 1 8.5 1.9V8.7A1.1 1.1 0 0 1 7.4 9.8H3.9" fill="rgba(255,255,255,.3)" stroke="#6e9dd6" stroke-width=".95"/><path d="M2.1 8.6C2.3 6.7 3.3 5.6 5 5" stroke="#6a6a6a" stroke-width="1.4" fill="none"/><path d="M3.6 2.9h3.3v3.3z" fill="#606060"/><path d="M.5 7.4v1.7c0 .9 1.8 .9 1.8 0V8.3" stroke="#8e8e8e" stroke-width=".8" fill="none"/></svg></span>
<span class="c" style="left:620px;width:60px;text-align:center">Dec-17</span>
<span class="wn"><svg width="11" height="12"><path d="M5.5 1.4C6.2 1.4 6.5 1.8 6.9 2.5L9.7 9C10.1 10 9.7 10.6 8.8 10.6H2.2C1.3 10.6 .9 10 1.3 9L4.1 2.5C4.5 1.8 4.8 1.4 5.5 1.4Z" fill="url(#wg)" stroke="#d8b541" stroke-width=".7"/><path d="M4.85 4h1.3l-.25 3.5h-.8z" fill="#10101c"/><rect x="4.9" y="8.1" width="1.2" height="1.2" rx=".4" fill="#3a3420"/></svg></span>
<span class="ph c" style="background:#82b864;color:#111;letter-spacing:0.25px">Uitvoering</span>
<span class="c" style="left:804px">Klein</span>
<span class="d dG" style="left:873.8px"></span>
<span class="d dY" style="left:934.8px"></span>
<span class="d dG" style="left:995.8px"></span>
<span class="d dR" style="left:1056.8px"></span>
<span class="g" style="left:1092px;width:331px;background:#82b864"></span>
</div>
<div class="r e" style="top:449px">
<span class="pn c" style="padding-left:18px">2000.05 - R&amp;D boarding method</span>
<span class="pr c" style="background:#f3c7c2">Hoog</span>
<span class="c" style="left:290.2px;letter-spacing:.28px">Middel</span>
<span class="c" style="left:350px;letter-spacing:.28px">Middel</span>
<span class="ex c"></span>
<span class="lk" style="left:525px"><svg width="10" height="11"><path d="M.5 5.6V1.9A1.1 1.1 0 0 1 1.6.8H7.4A1.1 1.1 0 0 1 8.5 1.9V8.7A1.1 1.1 0 0 1 7.4 9.8H3.9" fill="rgba(255,255,255,.3)" stroke="#6e9dd6" stroke-width=".95"/><path d="M2.1 8.6C2.3 6.7 3.3 5.6 5 5" stroke="#6a6a6a" stroke-width="1.4" fill="none"/><path d="M3.6 2.9h3.3v3.3z" fill="#606060"/><path d="M.5 7.4v1.7c0 .9 1.8 .9 1.8 0V8.3" stroke="#8e8e8e" stroke-width=".8" fill="none"/></svg></span><span class="lk" style="left:585px"><svg width="10" height="11"><path d="M.5 5.6V1.9A1.1 1.1 0 0 1 1.6.8H7.4A1.1 1.1 0 0 1 8.5 1.9V8.7A1.1 1.1 0 0 1 7.4 9.8H3.9" fill="rgba(255,255,255,.3)" stroke="#6e9dd6" stroke-width=".95"/><path d="M2.1 8.6C2.3 6.7 3.3 5.6 5 5" stroke="#6a6a6a" stroke-width="1.4" fill="none"/><path d="M3.6 2.9h3.3v3.3z" fill="#606060"/><path d="M.5 7.4v1.7c0 .9 1.8 .9 1.8 0V8.3" stroke="#8e8e8e" stroke-width=".8" fill="none"/></svg></span>
<span class="c" style="left:620px;width:60px;text-align:center">Oct-17</span>
<span class="wn"><svg width="11" height="12"><path d="M5.5 1.4C6.2 1.4 6.5 1.8 6.9 2.5L9.7 9C10.1 10 9.7 10.6 8.8 10.6H2.2C1.3 10.6 .9 10 1.3 9L4.1 2.5C4.5 1.8 4.8 1.4 5.5 1.4Z" fill="url(#wg)" stroke="#d8b541" stroke-width=".7"/><path d="M4.85 4h1.3l-.25 3.5h-.8z" fill="#10101c"/><rect x="4.9" y="8.1" width="1.2" height="1.2" rx=".4" fill="#3a3420"/></svg></span>
<span class="ph c" style="background:#82b864;color:#111;letter-spacing:0.25px">Uitvoering</span>
<span class="c" style="left:804px">Klein</span>
<span class="d dR" style="left:873.8px"></span>
<span class="d dY" style="left:934.8px"></span>
<span class="d dG" style="left:995.8px"></span>
<span class="d dY" style="left:1056.8px"></span>
<span class="g" style="left:1106px;width:332px;background:#82b864"></span>
</div>
<div class="r o" style="top:466px">
<span class="pn c" style="padding-left:18px">2000.06 - R&amp;D parking expansion</span>
<span class="pr c" style="background:#fbe3b0">Middel</span>
<span class="c" style="left:288.4px">Laag</span>
<span class="c" style="left:350px;letter-spacing:.28px">Middel</span>
<span class="ex c"></span>
<span class="lk" style="left:525px"><svg width="10" height="11"><path d="M.5 5.6V1.9A1.1 1.1 0 0 1 1.6.8H7.4A1.1 1.1 0 0 1 8.5 1.9V8.7A1.1 1.1 0 0 1 7.4 9.8H3.9" fill="rgba(255,255,255,.3)" stroke="#6e9dd6" stroke-width=".95"/><path d="M2.1 8.6C2.3 6.7 3.3 5.6 5 5" stroke="#6a6a6a" stroke-width="1.4" fill="none"/><path d="M3.6 2.9h3.3v3.3z" fill="#606060"/><path d="M.5 7.4v1.7c0 .9 1.8 .9 1.8 0V8.3" stroke="#8e8e8e" stroke-width=".8" fill="none"/></svg></span><span class="lk" style="left:585px"><svg width="10" height="11"><path d="M.5 5.6V1.9A1.1 1.1 0 0 1 1.6.8H7.4A1.1 1.1 0 0 1 8.5 1.9V8.7A1.1 1.1 0 0 1 7.4 9.8H3.9" fill="rgba(255,255,255,.3)" stroke="#6e9dd6" stroke-width=".95"/><path d="M2.1 8.6C2.3 6.7 3.3 5.6 5 5" stroke="#6a6a6a" stroke-width="1.4" fill="none"/><path d="M3.6 2.9h3.3v3.3z" fill="#606060"/><path d="M.5 7.4v1.7c0 .9 1.8 .9 1.8 0V8.3" stroke="#8e8e8e" stroke-width=".8" fill="none"/></svg></span>
<span class="c" style="left:620px;width:60px;text-align:center">Dec-17</span>
<span class="wn"><svg width="11" height="12"><path d="M5.5 1.4C6.2 1.4 6.5 1.8 6.9 2.5L9.7 9C10.1 10 9.7 10.6 8.8 10.6H2.2C1.3 10.6 .9 10 1.3 9L4.1 2.5C4.5 1.8 4.8 1.4 5.5 1.4Z" fill="url(#wg)" stroke="#d8b541" stroke-width=".7"/><path d="M4.85 4h1.3l-.25 3.5h-.8z" fill="#10101c"/><rect x="4.9" y="8.1" width="1.2" height="1.2" rx=".4" fill="#3a3420"/></svg></span>
<span class="ph c" style="background:#82b864;color:#111;letter-spacing:0.25px">Uitvoering</span>
<span class="c" style="left:804px">Klein</span>
<span class="d dY" style="left:873.8px"></span>
<span class="d dY" style="left:934.8px"></span>
<span class="d dG" style="left:995.8px"></span>
<span class="d dG" style="left:1056.8px"></span>
<span class="g" style="left:1092px;width:346px;background:#82b864"></span>
</div>
<div class="r e" style="top:483px">
<span class="pn c" style="padding-left:18px">2000.07 - R&amp;D business center</span>
<span class="pr c" style="background:#fbe3b0">Middel</span>
<span class="c" style="left:289.7px">Hoog</span>
<span class="c" style="left:350px">Laag</span>
<span class="ex c"></span>
<span class="lk" style="left:525px"><svg width="10" height="11"><path d="M.5 5.6V1.9A1.1 1.1 0 0 1 1.6.8H7.4A1.1 1.1 0 0 1 8.5 1.9V8.7A1.1 1.1 0 0 1 7.4 9.8H3.9" fill="rgba(255,255,255,.3)" stroke="#6e9dd6" stroke-width=".95"/><path d="M2.1 8.6C2.3 6.7 3.3 5.6 5 5" stroke="#6a6a6a" stroke-width="1.4" fill="none"/><path d="M3.6 2.9h3.3v3.3z" fill="#606060"/><path d="M.5 7.4v1.7c0 .9 1.8 .9 1.8 0V8.3" stroke="#8e8e8e" stroke-width=".8" fill="none"/></svg></span><span class="lk" style="left:585px"><svg width="10" height="11"><path d="M.5 5.6V1.9A1.1 1.1 0 0 1 1.6.8H7.4A1.1 1.1 0 0 1 8.5 1.9V8.7A1.1 1.1 0 0 1 7.4 9.8H3.9" fill="rgba(255,255,255,.3)" stroke="#6e9dd6" stroke-width=".95"/><path d="M2.1 8.6C2.3 6.7 3.3 5.6 5 5" stroke="#6a6a6a" stroke-width="1.4" fill="none"/><path d="M3.6 2.9h3.3v3.3z" fill="#606060"/><path d="M.5 7.4v1.7c0 .9 1.8 .9 1.8 0V8.3" stroke="#8e8e8e" stroke-width=".8" fill="none"/></svg></span>
<span class="c" style="left:620px;width:60px;text-align:center">Jan-18</span>
<span class="wn"><svg width="11" height="12"><path d="M5.5 1.4C6.2 1.4 6.5 1.8 6.9 2.5L9.7 9C10.1 10 9.7 10.6 8.8 10.6H2.2C1.3 10.6 .9 10 1.3 9L4.1 2.5C4.5 1.8 4.8 1.4 5.5 1.4Z" fill="url(#wg)" stroke="#d8b541" stroke-width=".7"/><path d="M4.85 4h1.3l-.25 3.5h-.8z" fill="#10101c"/><rect x="4.9" y="8.1" width="1.2" height="1.2" rx=".4" fill="#3a3420"/></svg></span>
<span class="ph c" style="background:#82b864;color:#111;letter-spacing:0.25px">Uitvoering</span>
<span class="c" style="left:804px">Klein</span>
<span class="d dR" style="left:873.8px"></span>
<span class="d dY" style="left:934.8px"></span>
<span class="d dG" style="left:995.8px"></span>
<span class="d dG" style="left:1056.8px"></span>
<span class="g" style="left:1092px;width:406px;background:#82b864"></span>
</div>
<div class="r o" style="top:500px">
<span class="pn c" style="padding-left:18px">2000.08 - R&amp;D airport retailing</span>
<span class="pr c" style="background:#f3c7c2">Hoog</span>
<span class="c" style="left:288.4px">Laag</span>
<span class="c" style="left:350px">Hoog</span>
<span class="ex c"></span>
<span class="lk" style="left:525px"><svg width="10" height="11"><path d="M.5 5.6V1.9A1.1 1.1 0 0 1 1.6.8H7.4A1.1 1.1 0 0 1 8.5 1.9V8.7A1.1 1.1 0 0 1 7.4 9.8H3.9" fill="rgba(255,255,255,.3)" stroke="#6e9dd6" stroke-width=".95"/><path d="M2.1 8.6C2.3 6.7 3.3 5.6 5 5" stroke="#6a6a6a" stroke-width="1.4" fill="none"/><path d="M3.6 2.9h3.3v3.3z" fill="#606060"/><path d="M.5 7.4v1.7c0 .9 1.8 .9 1.8 0V8.3" stroke="#8e8e8e" stroke-width=".8" fill="none"/></svg></span><span class="lk" style="left:585px"><svg width="10" height="11"><path d="M.5 5.6V1.9A1.1 1.1 0 0 1 1.6.8H7.4A1.1 1.1 0 0 1 8.5 1.9V8.7A1.1 1.1 0 0 1 7.4 9.8H3.9" fill="rgba(255,255,255,.3)" stroke="#6e9dd6" stroke-width=".95"/><path d="M2.1 8.6C2.3 6.7 3.3 5.6 5 5" stroke="#6a6a6a" stroke-width="1.4" fill="none"/><path d="M3.6 2.9h3.3v3.3z" fill="#606060"/><path d="M.5 7.4v1.7c0 .9 1.8 .9 1.8 0V8.3" stroke="#8e8e8e" stroke-width=".8" fill="none"/></svg></span>
<span class="c" style="left:620px;width:60px;text-align:center">Oct-17</span>
<span class="wn"><svg width="11" height="12"><path d="M5.5 1.4C6.2 1.4 6.5 1.8 6.9 2.5L9.7 9C10.1 10 9.7 10.6 8.8 10.6H2.2C1.3 10.6 .9 10 1.3 9L4.1 2.5C4.5 1.8 4.8 1.4 5.5 1.4Z" fill="url(#wg)" stroke="#d8b541" stroke-width=".7"/><path d="M4.85 4h1.3l-.25 3.5h-.8z" fill="#10101c"/><rect x="4.9" y="8.1" width="1.2" height="1.2" rx=".4" fill="#3a3420"/></svg></span>
<span class="ph c" style="background:#82b864;color:#111;letter-spacing:0.25px">Uitvoering</span>
<span class="c" style="left:804px">Klein</span>
<span class="d dY" style="left:873.8px"></span>
<span class="d dG" style="left:934.8px"></span>
<span class="d dY" style="left:995.8px"></span>
<span class="d dR" style="left:1056.8px"></span>
<span class="g" style="left:1106px;width:377px;background:#82b864"></span>
</div>
<div class="r e" style="top:517px">
<span class="pn c" style="padding-left:18px">2000.09 - R&amp;D new building system</span>
<span class="pr c" style="background:#f3c7c2">Hoog</span>
<span class="c" style="left:288.4px">Laag</span>
<span class="c" style="left:350px">Laag</span>
<span class="ex c"></span>
<span class="lk" style="left:525px"><svg width="10" height="11"><path d="M.5 5.6V1.9A1.1 1.1 0 0 1 1.6.8H7.4A1.1 1.1 0 0 1 8.5 1.9V8.7A1.1 1.1 0 0 1 7.4 9.8H3.9" fill="rgba(255,255,255,.3)" stroke="#6e9dd6" stroke-width=".95"/><path d="M2.1 8.6C2.3 6.7 3.3 5.6 5 5" stroke="#6a6a6a" stroke-width="1.4" fill="none"/><path d="M3.6 2.9h3.3v3.3z" fill="#606060"/><path d="M.5 7.4v1.7c0 .9 1.8 .9 1.8 0V8.3" stroke="#8e8e8e" stroke-width=".8" fill="none"/></svg></span><span class="lk" style="left:585px"><svg width="10" height="11"><path d="M.5 5.6V1.9A1.1 1.1 0 0 1 1.6.8H7.4A1.1 1.1 0 0 1 8.5 1.9V8.7A1.1 1.1 0 0 1 7.4 9.8H3.9" fill="rgba(255,255,255,.3)" stroke="#6e9dd6" stroke-width=".95"/><path d="M2.1 8.6C2.3 6.7 3.3 5.6 5 5" stroke="#6a6a6a" stroke-width="1.4" fill="none"/><path d="M3.6 2.9h3.3v3.3z" fill="#606060"/><path d="M.5 7.4v1.7c0 .9 1.8 .9 1.8 0V8.3" stroke="#8e8e8e" stroke-width=".8" fill="none"/></svg></span>
<span class="c" style="left:620px;width:60px;text-align:center">Dec-17</span>
<span class="wn"><svg width="11" height="12"><path d="M5.5 1.4C6.2 1.4 6.5 1.8 6.9 2.5L9.7 9C10.1 10 9.7 10.6 8.8 10.6H2.2C1.3 10.6 .9 10 1.3 9L4.1 2.5C4.5 1.8 4.8 1.4 5.5 1.4Z" fill="url(#wg)" stroke="#d8b541" stroke-width=".7"/><path d="M4.85 4h1.3l-.25 3.5h-.8z" fill="#10101c"/><rect x="4.9" y="8.1" width="1.2" height="1.2" rx=".4" fill="#3a3420"/></svg></span>
<span class="ph c" style="background:#82b864;color:#111;letter-spacing:0.25px">Uitvoering</span>
<span class="c" style="left:804px">Klein</span>
<span class="d dR" style="left:873.8px"></span>
<span class="d dR" style="left:934.8px"></span>
<span class="d dY" style="left:995.8px"></span>
<span class="d dG" style="left:1056.8px"></span>
<span class="g" style="left:1148px;width:275px;background:#82b864"></span>
</div>
<div class="r o" style="top:534px">
<span class="pn c" style="padding-left:4px">&#9662;&nbsp; 3000 - Marketing projects</span>
<span class="pr c" style="background:#fbe3b0">Middel</span>
<span class="c" style="left:290.2px;letter-spacing:.28px">Middel</span>
<span class="c" style="left:350px">Hoog</span>
<span class="ex c"></span>
<span class="c" style="left:620px;width:60px;text-align:center">Dec-17</span>
<span class="wn"><svg width="11" height="12"><path d="M5.5 1.4C6.2 1.4 6.5 1.8 6.9 2.5L9.7 9C10.1 10 9.7 10.6 8.8 10.6H2.2C1.3 10.6 .9 10 1.3 9L4.1 2.5C4.5 1.8 4.8 1.4 5.5 1.4Z" fill="url(#wg)" stroke="#d8b541" stroke-width=".7"/><path d="M4.85 4h1.3l-.25 3.5h-.8z" fill="#10101c"/><rect x="4.9" y="8.1" width="1.2" height="1.2" rx=".4" fill="#3a3420"/></svg></span>
<span class="ph c w" style="background:#b02315;color:#fff;letter-spacing:-0.1px">Selectie</span>
<span class="c" style="left:804px">Groot</span>
</div>
<div class="r e" style="top:551px">
<span class="pn c" style="padding-left:18px">3000.01 - Customer satisfaction</span>
<span class="pr c" style="background:#fbe3b0">Middel</span>
<span class="c" style="left:290.2px;letter-spacing:.28px">Middel</span>
<span class="c" style="left:350px;letter-spacing:.28px">Middel</span>
<span class="ex c"></span>
<span class="lk" style="left:525px"><svg width="10" height="11"><path d="M.5 5.6V1.9A1.1 1.1 0 0 1 1.6.8H7.4A1.1 1.1 0 0 1 8.5 1.9V8.7A1.1 1.1 0 0 1 7.4 9.8H3.9" fill="rgba(255,255,255,.3)" stroke="#6e9dd6" stroke-width=".95"/><path d="M2.1 8.6C2.3 6.7 3.3 5.6 5 5" stroke="#6a6a6a" stroke-width="1.4" fill="none"/><path d="M3.6 2.9h3.3v3.3z" fill="#606060"/><path d="M.5 7.4v1.7c0 .9 1.8 .9 1.8 0V8.3" stroke="#8e8e8e" stroke-width=".8" fill="none"/></svg></span><span class="lk" style="left:585px"><svg width="10" height="11"><path d="M.5 5.6V1.9A1.1 1.1 0 0 1 1.6.8H7.4A1.1 1.1 0 0 1 8.5 1.9V8.7A1.1 1.1 0 0 1 7.4 9.8H3.9" fill="rgba(255,255,255,.3)" stroke="#6e9dd6" stroke-width=".95"/><path d="M2.1 8.6C2.3 6.7 3.3 5.6 5 5" stroke="#6a6a6a" stroke-width="1.4" fill="none"/><path d="M3.6 2.9h3.3v3.3z" fill="#606060"/><path d="M.5 7.4v1.7c0 .9 1.8 .9 1.8 0V8.3" stroke="#8e8e8e" stroke-width=".8" fill="none"/></svg></span>
<span class="c" style="left:620px;width:60px;text-align:center">Nov-17</span>
<span class="wn"><svg width="11" height="12"><path d="M5.5 1.4C6.2 1.4 6.5 1.8 6.9 2.5L9.7 9C10.1 10 9.7 10.6 8.8 10.6H2.2C1.3 10.6 .9 10 1.3 9L4.1 2.5C4.5 1.8 4.8 1.4 5.5 1.4Z" fill="url(#wg)" stroke="#d8b541" stroke-width=".7"/><path d="M4.85 4h1.3l-.25 3.5h-.8z" fill="#10101c"/><rect x="4.9" y="8.1" width="1.2" height="1.2" rx=".4" fill="#3a3420"/></svg></span>
<span class="ph c" style="background:#82b864;color:#111;letter-spacing:0.25px">Uitvoering</span>
<span class="c" style="left:804px;letter-spacing:.28px">Middel</span>
<span class="d dG" style="left:873.8px"></span>
<span class="d dG" style="left:934.8px"></span>
<span class="d dG" style="left:995.8px"></span>
<span class="d dG" style="left:1056.8px"></span>
<span class="g" style="left:1092px;width:56px;background:#b02315"></span>
<span class="g" style="left:1148px;width:42px;background:#b8d8a6"></span>
<span class="g" style="left:1190px;width:233px;background:#82b864"></span>
</div>
<div class="r o" style="top:568px">
<span class="pn c" style="padding-left:18px">3000.02 - TV commercial</span>
<span class="pr c" style="background:#cfe6c4">Laag</span>
<span class="c" style="left:289.7px">Hoog</span>
<span class="c" style="left:350px;letter-spacing:.28px">Middel</span>
<span class="ex c"></span>
<span class="lk" style="left:525px"><svg width="10" height="11"><path d="M.5 5.6V1.9A1.1 1.1 0 0 1 1.6.8H7.4A1.1 1.1 0 0 1 8.5 1.9V8.7A1.1 1.1 0 0 1 7.4 9.8H3.9" fill="rgba(255,255,255,.3)" stroke="#6e9dd6" stroke-width=".95"/><path d="M2.1 8.6C2.3 6.7 3.3 5.6 5 5" stroke="#6a6a6a" stroke-width="1.4" fill="none"/><path d="M3.6 2.9h3.3v3.3z" fill="#606060"/><path d="M.5 7.4v1.7c0 .9 1.8 .9 1.8 0V8.3" stroke="#8e8e8e" stroke-width=".8" fill="none"/></svg></span><span class="lk" style="left:585px"><svg width="10" height="11"><path d="M.5 5.6V1.9A1.1 1.1 0 0 1 1.6.8H7.4A1.1 1.1 0 0 1 8.5 1.9V8.7A1.1 1.1 0 0 1 7.4 9.8H3.9" fill="rgba(255,255,255,.3)" stroke="#6e9dd6" stroke-width=".95"/><path d="M2.1 8.6C2.3 6.7 3.3 5.6 5 5" stroke="#6a6a6a" stroke-width="1.4" fill="none"/><path d="M3.6 2.9h3.3v3.3z" fill="#606060"/><path d="M.5 7.4v1.7c0 .9 1.8 .9 1.8 0V8.3" stroke="#8e8e8e" stroke-width=".8" fill="none"/></svg></span>
<span class="c" style="left:620px;width:60px;text-align:center">Jan-18</span>
<span class="wn"><svg width="11" height="12"><path d="M5.5 1.4C6.2 1.4 6.5 1.8 6.9 2.5L9.7 9C10.1 10 9.7 10.6 8.8 10.6H2.2C1.3 10.6 .9 10 1.3 9L4.1 2.5C4.5 1.8 4.8 1.4 5.5 1.4Z" fill="url(#wg)" stroke="#d8b541" stroke-width=".7"/><path d="M4.85 4h1.3l-.25 3.5h-.8z" fill="#10101c"/><rect x="4.9" y="8.1" width="1.2" height="1.2" rx=".4" fill="#3a3420"/></svg></span>
<span class="ph c" style="background:#b8d8a6;color:#111;letter-spacing:0.2px">Definitie</span>
<span class="c" style="left:804px;letter-spacing:.28px">Middel</span>
<span class="d dG" style="left:873.8px"></span>
<span class="d dY" style="left:934.8px"></span>
<span class="d dG" style="left:995.8px"></span>
<span class="d dG" style="left:1056.8px"></span>
<span class="g" style="left:1092px;width:112px;background:#b02315"></span>
<span class="g" style="left:1204px;width:42px;background:#b8d8a6"></span>
<span class="g" style="left:1246px;width:192px;background:#82b864"></span>
</div>
<div class="r e" style="top:585px">
<span class="pn c" style="padding-left:18px">3000.03 - Loyalty program</span>
<span class="pr c" style="background:#f3c7c2">Hoog</span>
<span class="c" style="left:289.7px">Hoog</span>
<span class="c" style="left:350px">Hoog</span>
<span class="ex c"></span>
<span class="lk" style="left:525px"><svg width="10" height="11"><path d="M.5 5.6V1.9A1.1 1.1 0 0 1 1.6.8H7.4A1.1 1.1 0 0 1 8.5 1.9V8.7A1.1 1.1 0 0 1 7.4 9.8H3.9" fill="rgba(255,255,255,.3)" stroke="#6e9dd6" stroke-width=".95"/><path d="M2.1 8.6C2.3 6.7 3.3 5.6 5 5" stroke="#6a6a6a" stroke-width="1.4" fill="none"/><path d="M3.6 2.9h3.3v3.3z" fill="#606060"/><path d="M.5 7.4v1.7c0 .9 1.8 .9 1.8 0V8.3" stroke="#8e8e8e" stroke-width=".8" fill="none"/></svg></span><span class="lk" style="left:585px"><svg width="10" height="11"><path d="M.5 5.6V1.9A1.1 1.1 0 0 1 1.6.8H7.4A1.1 1.1 0 0 1 8.5 1.9V8.7A1.1 1.1 0 0 1 7.4 9.8H3.9" fill="rgba(255,255,255,.3)" stroke="#6e9dd6" stroke-width=".95"/><path d="M2.1 8.6C2.3 6.7 3.3 5.6 5 5" stroke="#6a6a6a" stroke-width="1.4" fill="none"/><path d="M3.6 2.9h3.3v3.3z" fill="#606060"/><path d="M.5 7.4v1.7c0 .9 1.8 .9 1.8 0V8.3" stroke="#8e8e8e" stroke-width=".8" fill="none"/></svg></span>
<span class="c" style="left:620px;width:60px;text-align:center">Oct-17</span>
<span class="wn"><svg width="11" height="12"><path d="M5.5 1.4C6.2 1.4 6.5 1.8 6.9 2.5L9.7 9C10.1 10 9.7 10.6 8.8 10.6H2.2C1.3 10.6 .9 10 1.3 9L4.1 2.5C4.5 1.8 4.8 1.4 5.5 1.4Z" fill="url(#wg)" stroke="#d8b541" stroke-width=".7"/><path d="M4.85 4h1.3l-.25 3.5h-.8z" fill="#10101c"/><rect x="4.9" y="8.1" width="1.2" height="1.2" rx=".4" fill="#3a3420"/></svg></span>
<span class="ph c" style="background:#b8d8a6;color:#111;letter-spacing:0.2px">Definitie</span>
<span class="c" style="left:804px;letter-spacing:.28px">Middel</span>
<span class="d dR" style="left:873.8px"></span>
<span class="d dY" style="left:934.8px"></span>
<span class="d dY" style="left:995.8px"></span>
<span class="d dG" style="left:1056.8px"></span>
<span class="g" style="left:1092px;width:346px;background:#82b864"></span>
</div>
<div class="r o" style="top:602px">
<span class="pn c" style="padding-left:18px">3000.04 - R&amp;D newsletter receivers</span>
<span class="pr c" style="background:#f3c7c2">Hoog</span>
<span class="c" style="left:288.4px">Laag</span>
<span class="c" style="left:350px">Laag</span>
<span class="ex c"></span>
<span class="lk" style="left:525px"><svg width="10" height="11"><path d="M.5 5.6V1.9A1.1 1.1 0 0 1 1.6.8H7.4A1.1 1.1 0 0 1 8.5 1.9V8.7A1.1 1.1 0 0 1 7.4 9.8H3.9" fill="rgba(255,255,255,.3)" stroke="#6e9dd6" stroke-width=".95"/><path d="M2.1 8.6C2.3 6.7 3.3 5.6 5 5" stroke="#6a6a6a" stroke-width="1.4" fill="none"/><path d="M3.6 2.9h3.3v3.3z" fill="#606060"/><path d="M.5 7.4v1.7c0 .9 1.8 .9 1.8 0V8.3" stroke="#8e8e8e" stroke-width=".8" fill="none"/></svg></span><span class="lk" style="left:585px"><svg width="10" height="11"><path d="M.5 5.6V1.9A1.1 1.1 0 0 1 1.6.8H7.4A1.1 1.1 0 0 1 8.5 1.9V8.7A1.1 1.1 0 0 1 7.4 9.8H3.9" fill="rgba(255,255,255,.3)" stroke="#6e9dd6" stroke-width=".95"/><path d="M2.1 8.6C2.3 6.7 3.3 5.6 5 5" stroke="#6a6a6a" stroke-width="1.4" fill="none"/><path d="M3.6 2.9h3.3v3.3z" fill="#606060"/><path d="M.5 7.4v1.7c0 .9 1.8 .9 1.8 0V8.3" stroke="#8e8e8e" stroke-width=".8" fill="none"/></svg></span>
<span class="c" style="left:620px;width:60px;text-align:center">Nov-17</span>
<span class="wn"><svg width="11" height="12"><path d="M5.5 1.4C6.2 1.4 6.5 1.8 6.9 2.5L9.7 9C10.1 10 9.7 10.6 8.8 10.6H2.2C1.3 10.6 .9 10 1.3 9L4.1 2.5C4.5 1.8 4.8 1.4 5.5 1.4Z" fill="url(#wg)" stroke="#d8b541" stroke-width=".7"/><path d="M4.85 4h1.3l-.25 3.5h-.8z" fill="#10101c"/><rect x="4.9" y="8.1" width="1.2" height="1.2" rx=".4" fill="#3a3420"/></svg></span>
<span class="ph c w" style="background:#b02315;color:#fff;letter-spacing:-0.1px">Selectie</span>
<span class="c" style="left:804px;letter-spacing:.28px">Middel</span>
<span class="d dY" style="left:873.8px"></span>
<span class="d dG" style="left:934.8px"></span>
<span class="d dY" style="left:995.8px"></span>
<span class="d dG" style="left:1056.8px"></span>
<span class="g" style="left:1092px;width:140px;background:#b02315"></span>
<span class="g" style="left:1232px;width:14px;background:#b8d8a6"></span>
<span class="g" style="left:1246px;width:192px;background:#82b864"></span>
</div>
<div class="r e" style="top:619px">
<span class="pn c" style="padding-left:18px">3000.05 - App promotion</span>
<span class="pr c" style="background:#fbe3b0">Middel</span>
<span class="c" style="left:288.4px">Laag</span>
<span class="c" style="left:350px">Hoog</span>
<span class="ex c"></span>
<span class="lk" style="left:525px"><svg width="10" height="11"><path d="M.5 5.6V1.9A1.1 1.1 0 0 1 1.6.8H7.4A1.1 1.1 0 0 1 8.5 1.9V8.7A1.1 1.1 0 0 1 7.4 9.8H3.9" fill="rgba(255,255,255,.3)" stroke="#6e9dd6" stroke-width=".95"/><path d="M2.1 8.6C2.3 6.7 3.3 5.6 5 5" stroke="#6a6a6a" stroke-width="1.4" fill="none"/><path d="M3.6 2.9h3.3v3.3z" fill="#606060"/><path d="M.5 7.4v1.7c0 .9 1.8 .9 1.8 0V8.3" stroke="#8e8e8e" stroke-width=".8" fill="none"/></svg></span><span class="lk" style="left:585px"><svg width="10" height="11"><path d="M.5 5.6V1.9A1.1 1.1 0 0 1 1.6.8H7.4A1.1 1.1 0 0 1 8.5 1.9V8.7A1.1 1.1 0 0 1 7.4 9.8H3.9" fill="rgba(255,255,255,.3)" stroke="#6e9dd6" stroke-width=".95"/><path d="M2.1 8.6C2.3 6.7 3.3 5.6 5 5" stroke="#6a6a6a" stroke-width="1.4" fill="none"/><path d="M3.6 2.9h3.3v3.3z" fill="#606060"/><path d="M.5 7.4v1.7c0 .9 1.8 .9 1.8 0V8.3" stroke="#8e8e8e" stroke-width=".8" fill="none"/></svg></span>
<span class="c" style="left:620px;width:60px;text-align:center">Dec-17</span>
<span class="wn"><svg width="11" height="12"><path d="M5.5 1.4C6.2 1.4 6.5 1.8 6.9 2.5L9.7 9C10.1 10 9.7 10.6 8.8 10.6H2.2C1.3 10.6 .9 10 1.3 9L4.1 2.5C4.5 1.8 4.8 1.4 5.5 1.4Z" fill="url(#wg)" stroke="#d8b541" stroke-width=".7"/><path d="M4.85 4h1.3l-.25 3.5h-.8z" fill="#10101c"/><rect x="4.9" y="8.1" width="1.2" height="1.2" rx=".4" fill="#3a3420"/></svg></span>
<span class="ph c" style="background:#82b864;color:#111;letter-spacing:0.25px">Uitvoering</span>
<span class="c" style="left:804px;letter-spacing:.28px">Middel</span>
<span class="d dG" style="left:873.8px"></span>
<span class="d dR" style="left:934.8px"></span>
<span class="d dR" style="left:995.8px"></span>
<span class="d dR" style="left:1056.8px"></span>
<span class="g" style="left:1092px;width:98px;background:#b02315"></span>
<span class="g" style="left:1190px;width:70px;background:#b8d8a6"></span>
<span class="g" style="left:1260px;width:223px;background:#82b864"></span>
</div>
<div class="r o" style="top:636px">
<span class="pn c" style="padding-left:18px">3000.06 - Social media</span>
<span class="pr c" style="background:#fbe3b0">Middel</span>
<span class="c" style="left:289.7px">Hoog</span>
<span class="c" style="left:350px">Laag</span>
<span class="ex c"></span>
<span class="lk" style="left:525px"><svg width="10" height="11"><path d="M.5 5.6V1.9A1.1 1.1 0 0 1 1.6.8H7.4A1.1 1.1 0 0 1 8.5 1.9V8.7A1.1 1.1 0 0 1 7.4 9.8H3.9" fill="rgba(255,255,255,.3)" stroke="#6e9dd6" stroke-width=".95"/><path d="M2.1 8.6C2.3 6.7 3.3 5.6 5 5" stroke="#6a6a6a" stroke-width="1.4" fill="none"/><path d="M3.6 2.9h3.3v3.3z" fill="#606060"/><path d="M.5 7.4v1.7c0 .9 1.8 .9 1.8 0V8.3" stroke="#8e8e8e" stroke-width=".8" fill="none"/></svg></span><span class="lk" style="left:585px"><svg width="10" height="11"><path d="M.5 5.6V1.9A1.1 1.1 0 0 1 1.6.8H7.4A1.1 1.1 0 0 1 8.5 1.9V8.7A1.1 1.1 0 0 1 7.4 9.8H3.9" fill="rgba(255,255,255,.3)" stroke="#6e9dd6" stroke-width=".95"/><path d="M2.1 8.6C2.3 6.7 3.3 5.6 5 5" stroke="#6a6a6a" stroke-width="1.4" fill="none"/><path d="M3.6 2.9h3.3v3.3z" fill="#606060"/><path d="M.5 7.4v1.7c0 .9 1.8 .9 1.8 0V8.3" stroke="#8e8e8e" stroke-width=".8" fill="none"/></svg></span>
<span class="c" style="left:620px;width:60px;text-align:center">Nov-17</span>
<span class="wn"><svg width="11" height="12"><path d="M5.5 1.4C6.2 1.4 6.5 1.8 6.9 2.5L9.7 9C10.1 10 9.7 10.6 8.8 10.6H2.2C1.3 10.6 .9 10 1.3 9L4.1 2.5C4.5 1.8 4.8 1.4 5.5 1.4Z" fill="url(#wg)" stroke="#d8b541" stroke-width=".7"/><path d="M4.85 4h1.3l-.25 3.5h-.8z" fill="#10101c"/><rect x="4.9" y="8.1" width="1.2" height="1.2" rx=".4" fill="#3a3420"/></svg></span>
<span class="ph c" style="background:#82b864;color:#111;letter-spacing:0.25px">Uitvoering</span>
<span class="c" style="left:804px;letter-spacing:.28px">Middel</span>
<span class="d dR" style="left:873.8px"></span>
<span class="d dY" style="left:934.8px"></span>
<span class="d dR" style="left:995.8px"></span>
<span class="d dG" style="left:1056.8px"></span>
<span class="g" style="left:1092px;width:56px;background:#b02315"></span>
<span class="g" style="left:1148px;width:42px;background:#b8d8a6"></span>
<span class="g" style="left:1190px;width:233px;background:#82b864"></span>
</div>
<div class="r e" style="top:653px">
<span class="pn c" style="padding-left:18px">3000.07 - Frequent flyer</span>
<span class="pr c" style="background:#cfe6c4">Laag</span>
<span class="c" style="left:290.2px;letter-spacing:.28px">Middel</span>
<span class="c" style="left:350px;letter-spacing:.28px">Middel</span>
<span class="ex c"></span>
<span class="lk" style="left:525px"><svg width="10" height="11"><path d="M.5 5.6V1.9A1.1 1.1 0 0 1 1.6.8H7.4A1.1 1.1 0 0 1 8.5 1.9V8.7A1.1 1.1 0 0 1 7.4 9.8H3.9" fill="rgba(255,255,255,.3)" stroke="#6e9dd6" stroke-width=".95"/><path d="M2.1 8.6C2.3 6.7 3.3 5.6 5 5" stroke="#6a6a6a" stroke-width="1.4" fill="none"/><path d="M3.6 2.9h3.3v3.3z" fill="#606060"/><path d="M.5 7.4v1.7c0 .9 1.8 .9 1.8 0V8.3" stroke="#8e8e8e" stroke-width=".8" fill="none"/></svg></span><span class="lk" style="left:585px"><svg width="10" height="11"><path d="M.5 5.6V1.9A1.1 1.1 0 0 1 1.6.8H7.4A1.1 1.1 0 0 1 8.5 1.9V8.7A1.1 1.1 0 0 1 7.4 9.8H3.9" fill="rgba(255,255,255,.3)" stroke="#6e9dd6" stroke-width=".95"/><path d="M2.1 8.6C2.3 6.7 3.3 5.6 5 5" stroke="#6a6a6a" stroke-width="1.4" fill="none"/><path d="M3.6 2.9h3.3v3.3z" fill="#606060"/><path d="M.5 7.4v1.7c0 .9 1.8 .9 1.8 0V8.3" stroke="#8e8e8e" stroke-width=".8" fill="none"/></svg></span>
<span class="c" style="left:620px;width:60px;text-align:center">Jan-18</span>
<span class="wn"><svg width="11" height="12"><path d="M5.5 1.4C6.2 1.4 6.5 1.8 6.9 2.5L9.7 9C10.1 10 9.7 10.6 8.8 10.6H2.2C1.3 10.6 .9 10 1.3 9L4.1 2.5C4.5 1.8 4.8 1.4 5.5 1.4Z" fill="url(#wg)" stroke="#d8b541" stroke-width=".7"/><path d="M4.85 4h1.3l-.25 3.5h-.8z" fill="#10101c"/><rect x="4.9" y="8.1" width="1.2" height="1.2" rx=".4" fill="#3a3420"/></svg></span>
<span class="ph c w" style="background:#b02315;color:#fff;letter-spacing:-0.1px">Selectie</span>
<span class="c" style="left:804px;letter-spacing:.28px">Middel</span>
<span class="d dY" style="left:873.8px"></span>
<span class="d dG" style="left:934.8px"></span>
<span class="d dG" style="left:995.8px"></span>
<span class="d dY" style="left:1056.8px"></span>
<span class="g" style="left:1092px;width:140px;background:#b02315"></span>
<span class="g" style="left:1232px;width:42px;background:#b8d8a6"></span>
<span class="g" style="left:1274px;width:179px;background:#82b864"></span>
</div>
<div class="r o" style="top:670px">
<span class="pn c" style="padding-left:4px">&#9662;&nbsp; 4000 - Operations projects</span>
<span class="pr c" style="background:#f3c7c2">Hoog</span>
<span class="c" style="left:290.2px;letter-spacing:.28px">Middel</span>
<span class="c" style="left:350px;letter-spacing:.28px">Middel</span>
<span class="ex c"></span>
<span class="c" style="left:620px;width:60px;text-align:center">Dec-17</span>
<span class="wn"><svg width="11" height="12"><path d="M5.5 1.4C6.2 1.4 6.5 1.8 6.9 2.5L9.7 9C10.1 10 9.7 10.6 8.8 10.6H2.2C1.3 10.6 .9 10 1.3 9L4.1 2.5C4.5 1.8 4.8 1.4 5.5 1.4Z" fill="url(#wg)" stroke="#d8b541" stroke-width=".7"/><path d="M4.85 4h1.3l-.25 3.5h-.8z" fill="#10101c"/><rect x="4.9" y="8.1" width="1.2" height="1.2" rx=".4" fill="#3a3420"/></svg></span>
<span class="ph c" style="background:#82b864;color:#111;letter-spacing:0.25px">Uitvoering</span>
<span class="c" style="left:804px;letter-spacing:.28px">Middel</span>
</div>
<div class="r e" style="top:687px">
<span class="pn c" style="padding-left:18px">4000.01 - Luggage belt</span>
<span class="pr c" style="background:#fbe3b0">Middel</span>
<span class="c" style="left:290.2px;letter-spacing:.28px">Middel</span>
<span class="c" style="left:350px">Laag</span>
<span class="ex c"></span>
<span class="lk" style="left:525px"><svg width="10" height="11"><path d="M.5 5.6V1.9A1.1 1.1 0 0 1 1.6.8H7.4A1.1 1.1 0 0 1 8.5 1.9V8.7A1.1 1.1 0 0 1 7.4 9.8H3.9" fill="rgba(255,255,255,.3)" stroke="#6e9dd6" stroke-width=".95"/><path d="M2.1 8.6C2.3 6.7 3.3 5.6 5 5" stroke="#6a6a6a" stroke-width="1.4" fill="none"/><path d="M3.6 2.9h3.3v3.3z" fill="#606060"/><path d="M.5 7.4v1.7c0 .9 1.8 .9 1.8 0V8.3" stroke="#8e8e8e" stroke-width=".8" fill="none"/></svg></span><span class="lk" style="left:585px"><svg width="10" height="11"><path d="M.5 5.6V1.9A1.1 1.1 0 0 1 1.6.8H7.4A1.1 1.1 0 0 1 8.5 1.9V8.7A1.1 1.1 0 0 1 7.4 9.8H3.9" fill="rgba(255,255,255,.3)" stroke="#6e9dd6" stroke-width=".95"/><path d="M2.1 8.6C2.3 6.7 3.3 5.6 5 5" stroke="#6a6a6a" stroke-width="1.4" fill="none"/><path d="M3.6 2.9h3.3v3.3z" fill="#606060"/><path d="M.5 7.4v1.7c0 .9 1.8 .9 1.8 0V8.3" stroke="#8e8e8e" stroke-width=".8" fill="none"/></svg></span>
<span class="c" style="left:620px;width:60px;text-align:center">Jan-18</span>
<span class="wn"><svg width="11" height="12"><path d="M5.5 1.4C6.2 1.4 6.5 1.8 6.9 2.5L9.7 9C10.1 10 9.7 10.6 8.8 10.6H2.2C1.3 10.6 .9 10 1.3 9L4.1 2.5C4.5 1.8 4.8 1.4 5.5 1.4Z" fill="url(#wg)" stroke="#d8b541" stroke-width=".7"/><path d="M4.85 4h1.3l-.25 3.5h-.8z" fill="#10101c"/><rect x="4.9" y="8.1" width="1.2" height="1.2" rx=".4" fill="#3a3420"/></svg></span>
<span class="ph c" style="background:#82b864;color:#111;letter-spacing:0.25px">Uitvoering</span>
<span class="c" style="left:804px">Klein</span>
<span class="d dR" style="left:873.8px"></span>
<span class="d dR" style="left:934.8px"></span>
<span class="d dY" style="left:995.8px"></span>
<span class="d dR" style="left:1056.8px"></span>
<span class="g" style="left:1148px;width:275px;background:#82b864"></span>
</div>
<div class="r o" style="top:704px">
<span class="pn c" style="padding-left:18px">4000.02 - Gate signage</span>
<span class="pr c" style="background:#fbe3b0">Middel</span>
<span class="c" style="left:290.2px;letter-spacing:.28px">Middel</span>
<span class="c" style="left:350px">Hoog</span>
<span class="ex c"></span>
<span class="lk" style="left:525px"><svg width="10" height="11"><path d="M.5 5.6V1.9A1.1 1.1 0 0 1 1.6.8H7.4A1.1 1.1 0 0 1 8.5 1.9V8.7A1.1 1.1 0 0 1 7.4 9.8H3.9" fill="rgba(255,255,255,.3)" stroke="#6e9dd6" stroke-width=".95"/><path d="M2.1 8.6C2.3 6.7 3.3 5.6 5 5" stroke="#6a6a6a" stroke-width="1.4" fill="none"/><path d="M3.6 2.9h3.3v3.3z" fill="#606060"/><path d="M.5 7.4v1.7c0 .9 1.8 .9 1.8 0V8.3" stroke="#8e8e8e" stroke-width=".8" fill="none"/></svg></span><span class="lk" style="left:585px"><svg width="10" height="11"><path d="M.5 5.6V1.9A1.1 1.1 0 0 1 1.6.8H7.4A1.1 1.1 0 0 1 8.5 1.9V8.7A1.1 1.1 0 0 1 7.4 9.8H3.9" fill="rgba(255,255,255,.3)" stroke="#6e9dd6" stroke-width=".95"/><path d="M2.1 8.6C2.3 6.7 3.3 5.6 5 5" stroke="#6a6a6a" stroke-width="1.4" fill="none"/><path d="M3.6 2.9h3.3v3.3z" fill="#606060"/><path d="M.5 7.4v1.7c0 .9 1.8 .9 1.8 0V8.3" stroke="#8e8e8e" stroke-width=".8" fill="none"/></svg></span>
<span class="c" style="left:620px;width:60px;text-align:center">Jan-18</span>
<span class="wn"><svg width="11" height="12"><path d="M5.5 1.4C6.2 1.4 6.5 1.8 6.9 2.5L9.7 9C10.1 10 9.7 10.6 8.8 10.6H2.2C1.3 10.6 .9 10 1.3 9L4.1 2.5C4.5 1.8 4.8 1.4 5.5 1.4Z" fill="url(#wg)" stroke="#d8b541" stroke-width=".7"/><path d="M4.85 4h1.3l-.25 3.5h-.8z" fill="#10101c"/><rect x="4.9" y="8.1" width="1.2" height="1.2" rx=".4" fill="#3a3420"/></svg></span>
<span class="ph c" style="background:#82b864;color:#111;letter-spacing:0.25px">Uitvoering</span>
<span class="c" style="left:804px">Klein</span>
<span class="d dY" style="left:873.8px"></span>
<span class="d dR" style="left:934.8px"></span>
<span class="d dG" style="left:995.8px"></span>
<span class="d dG" style="left:1056.8px"></span>
<span class="g" style="left:1120px;width:318px;background:#82b864"></span>
</div>
<div class="r e" style="top:721px">
<span class="pn c" style="padding-left:18px">4000.03 - Reduce delays</span>
<span class="pr c" style="background:#cfe6c4">Laag</span>
<span class="c" style="left:288.4px">Laag</span>
<span class="c" style="left:350px">Laag</span>
<span class="ex c"></span>
<span class="lk" style="left:525px"><svg width="10" height="11"><path d="M.5 5.6V1.9A1.1 1.1 0 0 1 1.6.8H7.4A1.1 1.1 0 0 1 8.5 1.9V8.7A1.1 1.1 0 0 1 7.4 9.8H3.9" fill="rgba(255,255,255,.3)" stroke="#6e9dd6" stroke-width=".95"/><path d="M2.1 8.6C2.3 6.7 3.3 5.6 5 5" stroke="#6a6a6a" stroke-width="1.4" fill="none"/><path d="M3.6 2.9h3.3v3.3z" fill="#606060"/><path d="M.5 7.4v1.7c0 .9 1.8 .9 1.8 0V8.3" stroke="#8e8e8e" stroke-width=".8" fill="none"/></svg></span><span class="lk" style="left:585px"><svg width="10" height="11"><path d="M.5 5.6V1.9A1.1 1.1 0 0 1 1.6.8H7.4A1.1 1.1 0 0 1 8.5 1.9V8.7A1.1 1.1 0 0 1 7.4 9.8H3.9" fill="rgba(255,255,255,.3)" stroke="#6e9dd6" stroke-width=".95"/><path d="M2.1 8.6C2.3 6.7 3.3 5.6 5 5" stroke="#6a6a6a" stroke-width="1.4" fill="none"/><path d="M3.6 2.9h3.3v3.3z" fill="#606060"/><path d="M.5 7.4v1.7c0 .9 1.8 .9 1.8 0V8.3" stroke="#8e8e8e" stroke-width=".8" fill="none"/></svg></span>
<span class="c" style="left:620px;width:60px;text-align:center">Nov-17</span>
<span class="wn"><svg width="11" height="12"><path d="M5.5 1.4C6.2 1.4 6.5 1.8 6.9 2.5L9.7 9C10.1 10 9.7 10.6 8.8 10.6H2.2C1.3 10.6 .9 10 1.3 9L4.1 2.5C4.5 1.8 4.8 1.4 5.5 1.4Z" fill="url(#wg)" stroke="#d8b541" stroke-width=".7"/><path d="M4.85 4h1.3l-.25 3.5h-.8z" fill="#10101c"/><rect x="4.9" y="8.1" width="1.2" height="1.2" rx=".4" fill="#3a3420"/></svg></span>
<span class="ph c" style="background:#82b864;color:#111;letter-spacing:0.25px">Uitvoering</span>
<span class="c" style="left:804px">Klein</span>
<span class="d dG" style="left:873.8px"></span>
<span class="d dG" style="left:934.8px"></span>
<span class="d dG" style="left:995.8px"></span>
<span class="d dR" style="left:1056.8px"></span>
<span class="g" style="left:1092px;width:346px;background:#82b864"></span>
</div>
<div class="r o" style="top:738px">
<span class="pn c" style="padding-left:18px">4000.04 - Aviation Forecast</span>
<span class="pr c" style="background:#cfe6c4">Laag</span>
<span class="c" style="left:289.7px">Hoog</span>
<span class="c" style="left:350px">Hoog</span>
<span class="ex c"></span>
<span class="lk" style="left:525px"><svg width="10" height="11"><path d="M.5 5.6V1.9A1.1 1.1 0 0 1 1.6.8H7.4A1.1 1.1 0 0 1 8.5 1.9V8.7A1.1 1.1 0 0 1 7.4 9.8H3.9" fill="rgba(255,255,255,.3)" stroke="#6e9dd6" stroke-width=".95"/><path d="M2.1 8.6C2.3 6.7 3.3 5.6 5 5" stroke="#6a6a6a" stroke-width="1.4" fill="none"/><path d="M3.6 2.9h3.3v3.3z" fill="#606060"/><path d="M.5 7.4v1.7c0 .9 1.8 .9 1.8 0V8.3" stroke="#8e8e8e" stroke-width=".8" fill="none"/></svg></span><span class="lk" style="left:585px"><svg width="10" height="11"><path d="M.5 5.6V1.9A1.1 1.1 0 0 1 1.6.8H7.4A1.1 1.1 0 0 1 8.5 1.9V8.7A1.1 1.1 0 0 1 7.4 9.8H3.9" fill="rgba(255,255,255,.3)" stroke="#6e9dd6" stroke-width=".95"/><path d="M2.1 8.6C2.3 6.7 3.3 5.6 5 5" stroke="#6a6a6a" stroke-width="1.4" fill="none"/><path d="M3.6 2.9h3.3v3.3z" fill="#606060"/><path d="M.5 7.4v1.7c0 .9 1.8 .9 1.8 0V8.3" stroke="#8e8e8e" stroke-width=".8" fill="none"/></svg></span>
<span class="c" style="left:620px;width:60px;text-align:center">Jan-18</span>
<span class="wn"><svg width="11" height="12"><path d="M5.5 1.4C6.2 1.4 6.5 1.8 6.9 2.5L9.7 9C10.1 10 9.7 10.6 8.8 10.6H2.2C1.3 10.6 .9 10 1.3 9L4.1 2.5C4.5 1.8 4.8 1.4 5.5 1.4Z" fill="url(#wg)" stroke="#d8b541" stroke-width=".7"/><path d="M4.85 4h1.3l-.25 3.5h-.8z" fill="#10101c"/><rect x="4.9" y="8.1" width="1.2" height="1.2" rx=".4" fill="#3a3420"/></svg></span>
<span class="ph c" style="background:#82b864;color:#111;letter-spacing:0.25px">Uitvoering</span>
<span class="c" style="left:804px">Klein</span>
<span class="d dG" style="left:873.8px"></span>
<span class="d dG" style="left:934.8px"></span>
<span class="d dY" style="left:995.8px"></span>
<span class="d dG" style="left:1056.8px"></span>
<span class="g" style="left:1120px;width:378px;background:#82b864"></span>
</div>
<div class="r e" style="top:755px">
<span class="pn c" style="padding-left:18px">4000.05 - Refurbish luggage handling</span>
<span class="pr c" style="background:#cfe6c4">Laag</span>
<span class="c" style="left:290.2px;letter-spacing:.28px">Middel</span>
<span class="c" style="left:350px;letter-spacing:.28px">Middel</span>
<span class="ex c"></span>
<span class="lk" style="left:525px"><svg width="10" height="11"><path d="M.5 5.6V1.9A1.1 1.1 0 0 1 1.6.8H7.4A1.1 1.1 0 0 1 8.5 1.9V8.7A1.1 1.1 0 0 1 7.4 9.8H3.9" fill="rgba(255,255,255,.3)" stroke="#6e9dd6" stroke-width=".95"/><path d="M2.1 8.6C2.3 6.7 3.3 5.6 5 5" stroke="#6a6a6a" stroke-width="1.4" fill="none"/><path d="M3.6 2.9h3.3v3.3z" fill="#606060"/><path d="M.5 7.4v1.7c0 .9 1.8 .9 1.8 0V8.3" stroke="#8e8e8e" stroke-width=".8" fill="none"/></svg></span><span class="lk" style="left:585px"><svg width="10" height="11"><path d="M.5 5.6V1.9A1.1 1.1 0 0 1 1.6.8H7.4A1.1 1.1 0 0 1 8.5 1.9V8.7A1.1 1.1 0 0 1 7.4 9.8H3.9" fill="rgba(255,255,255,.3)" stroke="#6e9dd6" stroke-width=".95"/><path d="M2.1 8.6C2.3 6.7 3.3 5.6 5 5" stroke="#6a6a6a" stroke-width="1.4" fill="none"/><path d="M3.6 2.9h3.3v3.3z" fill="#606060"/><path d="M.5 7.4v1.7c0 .9 1.8 .9 1.8 0V8.3" stroke="#8e8e8e" stroke-width=".8" fill="none"/></svg></span>
<span class="c" style="left:620px;width:60px;text-align:center">Nov-17</span>
<span class="wn"><svg width="11" height="12"><path d="M5.5 1.4C6.2 1.4 6.5 1.8 6.9 2.5L9.7 9C10.1 10 9.7 10.6 8.8 10.6H2.2C1.3 10.6 .9 10 1.3 9L4.1 2.5C4.5 1.8 4.8 1.4 5.5 1.4Z" fill="url(#wg)" stroke="#d8b541" stroke-width=".7"/><path d="M4.85 4h1.3l-.25 3.5h-.8z" fill="#10101c"/><rect x="4.9" y="8.1" width="1.2" height="1.2" rx=".4" fill="#3a3420"/></svg></span>
<span class="ph c" style="background:#82b864;color:#111;letter-spacing:0.25px">Uitvoering</span>
<span class="c" style="left:804px">Klein</span>
<span class="d dR" style="left:873.8px"></span>
<span class="d dG" style="left:934.8px"></span>
<span class="d dG" style="left:995.8px"></span>
<span class="d dY" style="left:1056.8px"></span>
<span class="g" style="left:1106px;width:317px;background:#82b864"></span>
</div>
<div class="r o" style="top:772px">
<span class="pn c" style="padding-left:18px">4000.06 - Replace information displays</span>
<span class="pr c" style="background:#f3c7c2">Hoog</span>
<span class="c" style="left:290.2px;letter-spacing:.28px">Middel</span>
<span class="c" style="left:350px;letter-spacing:.28px">Middel</span>
<span class="ex c"></span>
<span class="lk" style="left:525px"><svg width="10" height="11"><path d="M.5 5.6V1.9A1.1 1.1 0 0 1 1.6.8H7.4A1.1 1.1 0 0 1 8.5 1.9V8.7A1.1 1.1 0 0 1 7.4 9.8H3.9" fill="rgba(255,255,255,.3)" stroke="#6e9dd6" stroke-width=".95"/><path d="M2.1 8.6C2.3 6.7 3.3 5.6 5 5" stroke="#6a6a6a" stroke-width="1.4" fill="none"/><path d="M3.6 2.9h3.3v3.3z" fill="#606060"/><path d="M.5 7.4v1.7c0 .9 1.8 .9 1.8 0V8.3" stroke="#8e8e8e" stroke-width=".8" fill="none"/></svg></span><span class="lk" style="left:585px"><svg width="10" height="11"><path d="M.5 5.6V1.9A1.1 1.1 0 0 1 1.6.8H7.4A1.1 1.1 0 0 1 8.5 1.9V8.7A1.1 1.1 0 0 1 7.4 9.8H3.9" fill="rgba(255,255,255,.3)" stroke="#6e9dd6" stroke-width=".95"/><path d="M2.1 8.6C2.3 6.7 3.3 5.6 5 5" stroke="#6a6a6a" stroke-width="1.4" fill="none"/><path d="M3.6 2.9h3.3v3.3z" fill="#606060"/><path d="M.5 7.4v1.7c0 .9 1.8 .9 1.8 0V8.3" stroke="#8e8e8e" stroke-width=".8" fill="none"/></svg></span>
<span class="c" style="left:620px;width:60px;text-align:center">Jan-18</span>
<span class="wn"><svg width="11" height="12"><path d="M5.5 1.4C6.2 1.4 6.5 1.8 6.9 2.5L9.7 9C10.1 10 9.7 10.6 8.8 10.6H2.2C1.3 10.6 .9 10 1.3 9L4.1 2.5C4.5 1.8 4.8 1.4 5.5 1.4Z" fill="url(#wg)" stroke="#d8b541" stroke-width=".7"/><path d="M4.85 4h1.3l-.25 3.5h-.8z" fill="#10101c"/><rect x="4.9" y="8.1" width="1.2" height="1.2" rx=".4" fill="#3a3420"/></svg></span>
<span class="ph c" style="background:#82b864;color:#111;letter-spacing:0.25px">Uitvoering</span>
<span class="c" style="left:804px">Klein</span>
<span class="d dY" style="left:873.8px"></span>
<span class="d dG" style="left:934.8px"></span>
<span class="d dG" style="left:995.8px"></span>
<span class="d dR" style="left:1056.8px"></span>
<span class="g" style="left:1134px;width:304px;background:#82b864"></span>
</div>
<div class="r e" style="top:789px">
<span class="pn c" style="padding-left:18px">4000.07 - Runway extension</span>
<span class="pr c" style="background:#fbe3b0">Middel</span>
<span class="c" style="left:288.4px">Laag</span>
<span class="c" style="left:350px;letter-spacing:.28px">Middel</span>
<span class="ex c"></span>
<span class="lk" style="left:525px"><svg width="10" height="11"><path d="M.5 5.6V1.9A1.1 1.1 0 0 1 1.6.8H7.4A1.1 1.1 0 0 1 8.5 1.9V8.7A1.1 1.1 0 0 1 7.4 9.8H3.9" fill="rgba(255,255,255,.3)" stroke="#6e9dd6" stroke-width=".95"/><path d="M2.1 8.6C2.3 6.7 3.3 5.6 5 5" stroke="#6a6a6a" stroke-width="1.4" fill="none"/><path d="M3.6 2.9h3.3v3.3z" fill="#606060"/><path d="M.5 7.4v1.7c0 .9 1.8 .9 1.8 0V8.3" stroke="#8e8e8e" stroke-width=".8" fill="none"/></svg></span><span class="lk" style="left:585px"><svg width="10" height="11"><path d="M.5 5.6V1.9A1.1 1.1 0 0 1 1.6.8H7.4A1.1 1.1 0 0 1 8.5 1.9V8.7A1.1 1.1 0 0 1 7.4 9.8H3.9" fill="rgba(255,255,255,.3)" stroke="#6e9dd6" stroke-width=".95"/><path d="M2.1 8.6C2.3 6.7 3.3 5.6 5 5" stroke="#6a6a6a" stroke-width="1.4" fill="none"/><path d="M3.6 2.9h3.3v3.3z" fill="#606060"/><path d="M.5 7.4v1.7c0 .9 1.8 .9 1.8 0V8.3" stroke="#8e8e8e" stroke-width=".8" fill="none"/></svg></span>
<span class="c" style="left:620px;width:60px;text-align:center">Dec-17</span>
<span class="wn"><svg width="11" height="12"><path d="M5.5 1.4C6.2 1.4 6.5 1.8 6.9 2.5L9.7 9C10.1 10 9.7 10.6 8.8 10.6H2.2C1.3 10.6 .9 10 1.3 9L4.1 2.5C4.5 1.8 4.8 1.4 5.5 1.4Z" fill="url(#wg)" stroke="#d8b541" stroke-width=".7"/><path d="M4.85 4h1.3l-.25 3.5h-.8z" fill="#10101c"/><rect x="4.9" y="8.1" width="1.2" height="1.2" rx=".4" fill="#3a3420"/></svg></span>
<span class="ph c" style="background:#82b864;color:#111;letter-spacing:0.25px">Uitvoering</span>
<span class="c" style="left:804px">Klein</span>
<span class="d dR" style="left:873.8px"></span>
<span class="d dY" style="left:934.8px"></span>
<span class="d dG" style="left:995.8px"></span>
<span class="d dG" style="left:1056.8px"></span>
<span class="g" style="left:1148px;width:290px;background:#82b864"></span>
</div>
<div class="r o" style="top:806px">
<span class="pn c" style="padding-left:18px">4000.08 - Terminal schemes evaluation</span>
<span class="pr c" style="background:#fbe3b0">Middel</span>
<span class="c" style="left:289.7px">Hoog</span>
<span class="c" style="left:350px;letter-spacing:.28px">Middel</span>
<span class="ex c"></span>
<span class="lk" style="left:525px"><svg width="10" height="11"><path d="M.5 5.6V1.9A1.1 1.1 0 0 1 1.6.8H7.4A1.1 1.1 0 0 1 8.5 1.9V8.7A1.1 1.1 0 0 1 7.4 9.8H3.9" fill="rgba(255,255,255,.3)" stroke="#6e9dd6" stroke-width=".95"/><path d="M2.1 8.6C2.3 6.7 3.3 5.6 5 5" stroke="#6a6a6a" stroke-width="1.4" fill="none"/><path d="M3.6 2.9h3.3v3.3z" fill="#606060"/><path d="M.5 7.4v1.7c0 .9 1.8 .9 1.8 0V8.3" stroke="#8e8e8e" stroke-width=".8" fill="none"/></svg></span><span class="lk" style="left:585px"><svg width="10" height="11"><path d="M.5 5.6V1.9A1.1 1.1 0 0 1 1.6.8H7.4A1.1 1.1 0 0 1 8.5 1.9V8.7A1.1 1.1 0 0 1 7.4 9.8H3.9" fill="rgba(255,255,255,.3)" stroke="#6e9dd6" stroke-width=".95"/><path d="M2.1 8.6C2.3 6.7 3.3 5.6 5 5" stroke="#6a6a6a" stroke-width="1.4" fill="none"/><path d="M3.6 2.9h3.3v3.3z" fill="#606060"/><path d="M.5 7.4v1.7c0 .9 1.8 .9 1.8 0V8.3" stroke="#8e8e8e" stroke-width=".8" fill="none"/></svg></span>
<span class="c" style="left:620px;width:60px;text-align:center">Oct-17</span>
<span class="wn"><svg width="11" height="12"><path d="M5.5 1.4C6.2 1.4 6.5 1.8 6.9 2.5L9.7 9C10.1 10 9.7 10.6 8.8 10.6H2.2C1.3 10.6 .9 10 1.3 9L4.1 2.5C4.5 1.8 4.8 1.4 5.5 1.4Z" fill="url(#wg)" stroke="#d8b541" stroke-width=".7"/><path d="M4.85 4h1.3l-.25 3.5h-.8z" fill="#10101c"/><rect x="4.9" y="8.1" width="1.2" height="1.2" rx=".4" fill="#3a3420"/></svg></span>
<span class="ph c" style="background:#82b864;color:#111;letter-spacing:0.25px">Uitvoering</span>
<span class="c" style="left:804px">Klein</span>
<span class="d dG" style="left:873.8px"></span>
<span class="d dG" style="left:934.8px"></span>
<span class="d dG" style="left:995.8px"></span>
<span class="d dY" style="left:1056.8px"></span>
<span class="g" style="left:1148px;width:350px;background:#82b864"></span>
</div>
<div class="r e" style="top:823px">
<span class="pn c" style="padding-left:18px">4000.09 - Hangar maintenance</span>
<span class="pr c" style="background:#cfe6c4">Laag</span>
<span class="c" style="left:288.4px">Laag</span>
<span class="c" style="left:350px">Laag</span>
<span class="ex c"></span>
<span class="lk" style="left:525px"><svg width="10" height="11"><path d="M.5 5.6V1.9A1.1 1.1 0 0 1 1.6.8H7.4A1.1 1.1 0 0 1 8.5 1.9V8.7A1.1 1.1 0 0 1 7.4 9.8H3.9" fill="rgba(255,255,255,.3)" stroke="#6e9dd6" stroke-width=".95"/><path d="M2.1 8.6C2.3 6.7 3.3 5.6 5 5" stroke="#6a6a6a" stroke-width="1.4" fill="none"/><path d="M3.6 2.9h3.3v3.3z" fill="#606060"/><path d="M.5 7.4v1.7c0 .9 1.8 .9 1.8 0V8.3" stroke="#8e8e8e" stroke-width=".8" fill="none"/></svg></span><span class="lk" style="left:585px"><svg width="10" height="11"><path d="M.5 5.6V1.9A1.1 1.1 0 0 1 1.6.8H7.4A1.1 1.1 0 0 1 8.5 1.9V8.7A1.1 1.1 0 0 1 7.4 9.8H3.9" fill="rgba(255,255,255,.3)" stroke="#6e9dd6" stroke-width=".95"/><path d="M2.1 8.6C2.3 6.7 3.3 5.6 5 5" stroke="#6a6a6a" stroke-width="1.4" fill="none"/><path d="M3.6 2.9h3.3v3.3z" fill="#606060"/><path d="M.5 7.4v1.7c0 .9 1.8 .9 1.8 0V8.3" stroke="#8e8e8e" stroke-width=".8" fill="none"/></svg></span>
<span class="c" style="left:620px;width:60px;text-align:center">Dec-17</span>
<span class="wn"><svg width="11" height="12"><path d="M5.5 1.4C6.2 1.4 6.5 1.8 6.9 2.5L9.7 9C10.1 10 9.7 10.6 8.8 10.6H2.2C1.3 10.6 .9 10 1.3 9L4.1 2.5C4.5 1.8 4.8 1.4 5.5 1.4Z" fill="url(#wg)" stroke="#d8b541" stroke-width=".7"/><path d="M4.85 4h1.3l-.25 3.5h-.8z" fill="#10101c"/><rect x="4.9" y="8.1" width="1.2" height="1.2" rx=".4" fill="#3a3420"/></svg></span>
<span class="ph c" style="background:#82b864;color:#111;letter-spacing:0.25px">Uitvoering</span>
<span class="c" style="left:804px">Klein</span>
<span class="d dG" style="left:873.8px"></span>
<span class="d dG" style="left:934.8px"></span>
<span class="d dY" style="left:995.8px"></span>
<span class="d dR" style="left:1056.8px"></span>
<span class="g" style="left:1134px;width:349px;background:#82b864"></span>
</div>
<div class="r o" style="top:840px">
<span class="pn c" style="padding-left:18px">4000.11 - Refuel facilities</span>
<span class="pr c" style="background:#cfe6c4">Laag</span>
<span class="c" style="left:289.7px">Hoog</span>
<span class="c" style="left:350px">Laag</span>
<span class="ex c"></span>
<span class="lk" style="left:525px"><svg width="10" height="11"><path d="M.5 5.6V1.9A1.1 1.1 0 0 1 1.6.8H7.4A1.1 1.1 0 0 1 8.5 1.9V8.7A1.1 1.1 0 0 1 7.4 9.8H3.9" fill="rgba(255,255,255,.3)" stroke="#6e9dd6" stroke-width=".95"/><path d="M2.1 8.6C2.3 6.7 3.3 5.6 5 5" stroke="#6a6a6a" stroke-width="1.4" fill="none"/><path d="M3.6 2.9h3.3v3.3z" fill="#606060"/><path d="M.5 7.4v1.7c0 .9 1.8 .9 1.8 0V8.3" stroke="#8e8e8e" stroke-width=".8" fill="none"/></svg></span><span class="lk" style="left:585px"><svg width="10" height="11"><path d="M.5 5.6V1.9A1.1 1.1 0 0 1 1.6.8H7.4A1.1 1.1 0 0 1 8.5 1.9V8.7A1.1 1.1 0 0 1 7.4 9.8H3.9" fill="rgba(255,255,255,.3)" stroke="#6e9dd6" stroke-width=".95"/><path d="M2.1 8.6C2.3 6.7 3.3 5.6 5 5" stroke="#6a6a6a" stroke-width="1.4" fill="none"/><path d="M3.6 2.9h3.3v3.3z" fill="#606060"/><path d="M.5 7.4v1.7c0 .9 1.8 .9 1.8 0V8.3" stroke="#8e8e8e" stroke-width=".8" fill="none"/></svg></span>
<span class="c" style="left:620px;width:60px;text-align:center">Nov-17</span>
<span class="wn"><svg width="11" height="12"><path d="M5.5 1.4C6.2 1.4 6.5 1.8 6.9 2.5L9.7 9C10.1 10 9.7 10.6 8.8 10.6H2.2C1.3 10.6 .9 10 1.3 9L4.1 2.5C4.5 1.8 4.8 1.4 5.5 1.4Z" fill="url(#wg)" stroke="#d8b541" stroke-width=".7"/><path d="M4.85 4h1.3l-.25 3.5h-.8z" fill="#10101c"/><rect x="4.9" y="8.1" width="1.2" height="1.2" rx=".4" fill="#3a3420"/></svg></span>
<span class="ph c" style="background:#82b864;color:#111;letter-spacing:0.25px">Uitvoering</span>
<span class="c" style="left:804px">Klein</span>
<span class="d dR" style="left:873.8px"></span>
<span class="d dY" style="left:934.8px"></span>
<span class="d dG" style="left:995.8px"></span>
<span class="d dG" style="left:1056.8px"></span>
<span class="g" style="left:1134px;width:289px;background:#82b864"></span>
</div>
<div class="r e" style="top:857px">
<span class="pn c" style="padding-left:4px">&#9662;&nbsp; 5000 - Environmental projects</span>
<span class="pr c" style="background:#cfe6c4">Laag</span>
<span class="c" style="left:289.7px">Hoog</span>
<span class="c" style="left:350px">Hoog</span>
<span class="ex c"></span>
<span class="c" style="left:620px;width:60px;text-align:center">Jan-18</span>
<span class="wn"><svg width="11" height="12"><path d="M5.5 1.4C6.2 1.4 6.5 1.8 6.9 2.5L9.7 9C10.1 10 9.7 10.6 8.8 10.6H2.2C1.3 10.6 .9 10 1.3 9L4.1 2.5C4.5 1.8 4.8 1.4 5.5 1.4Z" fill="url(#wg)" stroke="#d8b541" stroke-width=".7"/><path d="M4.85 4h1.3l-.25 3.5h-.8z" fill="#10101c"/><rect x="4.9" y="8.1" width="1.2" height="1.2" rx=".4" fill="#3a3420"/></svg></span>
<span class="ph c" style="background:#82b864;color:#111;letter-spacing:0.25px">Uitvoering</span>
<span class="c" style="left:804px">Groot</span>
</div>
<div class="r o" style="top:874px">
<span class="pn c" style="padding-left:18px">5000.01 - Social Responsibility</span>
<span class="pr c" style="background:#fbe3b0">Middel</span>
<span class="c" style="left:290.2px;letter-spacing:.28px">Middel</span>
<span class="c" style="left:350px">Laag</span>
<span class="ex c"></span>
<span class="lk" style="left:525px"><svg width="10" height="11"><path d="M.5 5.6V1.9A1.1 1.1 0 0 1 1.6.8H7.4A1.1 1.1 0 0 1 8.5 1.9V8.7A1.1 1.1 0 0 1 7.4 9.8H3.9" fill="rgba(255,255,255,.3)" stroke="#6e9dd6" stroke-width=".95"/><path d="M2.1 8.6C2.3 6.7 3.3 5.6 5 5" stroke="#6a6a6a" stroke-width="1.4" fill="none"/><path d="M3.6 2.9h3.3v3.3z" fill="#606060"/><path d="M.5 7.4v1.7c0 .9 1.8 .9 1.8 0V8.3" stroke="#8e8e8e" stroke-width=".8" fill="none"/></svg></span><span class="lk" style="left:585px"><svg width="10" height="11"><path d="M.5 5.6V1.9A1.1 1.1 0 0 1 1.6.8H7.4A1.1 1.1 0 0 1 8.5 1.9V8.7A1.1 1.1 0 0 1 7.4 9.8H3.9" fill="rgba(255,255,255,.3)" stroke="#6e9dd6" stroke-width=".95"/><path d="M2.1 8.6C2.3 6.7 3.3 5.6 5 5" stroke="#6a6a6a" stroke-width="1.4" fill="none"/><path d="M3.6 2.9h3.3v3.3z" fill="#606060"/><path d="M.5 7.4v1.7c0 .9 1.8 .9 1.8 0V8.3" stroke="#8e8e8e" stroke-width=".8" fill="none"/></svg></span>
<span class="c" style="left:620px;width:60px;text-align:center">Nov-17</span>
<span class="wn"><svg width="11" height="12"><path d="M5.5 1.4C6.2 1.4 6.5 1.8 6.9 2.5L9.7 9C10.1 10 9.7 10.6 8.8 10.6H2.2C1.3 10.6 .9 10 1.3 9L4.1 2.5C4.5 1.8 4.8 1.4 5.5 1.4Z" fill="url(#wg)" stroke="#d8b541" stroke-width=".7"/><path d="M4.85 4h1.3l-.25 3.5h-.8z" fill="#10101c"/><rect x="4.9" y="8.1" width="1.2" height="1.2" rx=".4" fill="#3a3420"/></svg></span>
<span class="ph c w" style="background:#b02315;color:#fff;letter-spacing:-0.1px">Selectie</span>
<span class="c" style="left:804px">Groot</span>
<span class="d dR" style="left:873.8px"></span>
<span class="d dY" style="left:934.8px"></span>
<span class="d dY" style="left:995.8px"></span>
<span class="d dY" style="left:1056.8px"></span>
<span class="g" style="left:1092px;width:42px;background:#334496"></span>
<span class="g" style="left:1134px;width:56px;background:#b02315"></span>
<span class="g" style="left:1190px;width:70px;background:#b8d8a6"></span>
<span class="g" style="left:1260px;width:148px;background:#82b864"></span>
<span class="g" style="left:1408px;width:45px;background:#629343"></span>
</div>
<div class="r e" style="top:891px">
<span class="pn c" style="padding-left:18px">5000.02 - Noise abatement</span>
<span class="pr c" style="background:#cfe6c4">Laag</span>
<span class="c" style="left:290.2px;letter-spacing:.28px">Middel</span>
<span class="c" style="left:350px">Hoog</span>
<span class="ex c"></span>
<span class="lk" style="left:525px"><svg width="10" height="11"><path d="M.5 5.6V1.9A1.1 1.1 0 0 1 1.6.8H7.4A1.1 1.1 0 0 1 8.5 1.9V8.7A1.1 1.1 0 0 1 7.4 9.8H3.9" fill="rgba(255,255,255,.3)" stroke="#6e9dd6" stroke-width=".95"/><path d="M2.1 8.6C2.3 6.7 3.3 5.6 5 5" stroke="#6a6a6a" stroke-width="1.4" fill="none"/><path d="M3.6 2.9h3.3v3.3z" fill="#606060"/><path d="M.5 7.4v1.7c0 .9 1.8 .9 1.8 0V8.3" stroke="#8e8e8e" stroke-width=".8" fill="none"/></svg></span><span class="lk" style="left:585px"><svg width="10" height="11"><path d="M.5 5.6V1.9A1.1 1.1 0 0 1 1.6.8H7.4A1.1 1.1 0 0 1 8.5 1.9V8.7A1.1 1.1 0 0 1 7.4 9.8H3.9" fill="rgba(255,255,255,.3)" stroke="#6e9dd6" stroke-width=".95"/><path d="M2.1 8.6C2.3 6.7 3.3 5.6 5 5" stroke="#6a6a6a" stroke-width="1.4" fill="none"/><path d="M3.6 2.9h3.3v3.3z" fill="#606060"/><path d="M.5 7.4v1.7c0 .9 1.8 .9 1.8 0V8.3" stroke="#8e8e8e" stroke-width=".8" fill="none"/></svg></span>
<span class="c" style="left:620px;width:60px;text-align:center">Dec-17</span>
<span class="wn"><svg width="11" height="12"><path d="M5.5 1.4C6.2 1.4 6.5 1.8 6.9 2.5L9.7 9C10.1 10 9.7 10.6 8.8 10.6H2.2C1.3 10.6 .9 10 1.3 9L4.1 2.5C4.5 1.8 4.8 1.4 5.5 1.4Z" fill="url(#wg)" stroke="#d8b541" stroke-width=".7"/><path d="M4.85 4h1.3l-.25 3.5h-.8z" fill="#10101c"/><rect x="4.9" y="8.1" width="1.2" height="1.2" rx=".4" fill="#3a3420"/></svg></span>
<span class="ph c" style="background:#b8d8a6;color:#111;letter-spacing:0.2px">Definitie</span>
<span class="c" style="left:804px">Groot</span>
<span class="d dG" style="left:873.8px"></span>
<span class="d dG" style="left:934.8px"></span>
<span class="d dG" style="left:995.8px"></span>
<span class="d dR" style="left:1056.8px"></span>
<span class="g" style="left:1092px;width:42px;background:#334496"></span>
<span class="g" style="left:1134px;width:28px;background:#b02315"></span>
<span class="g" style="left:1162px;width:84px;background:#b8d8a6"></span>
<span class="g" style="left:1246px;width:147px;background:#82b864"></span>
<span class="g" style="left:1393px;width:45px;background:#629343"></span>
</div>
<div class="r o" style="top:908px">
<span class="pn c" style="padding-left:18px">5000.03 - Environmental awareness</span>
<span class="pr c" style="background:#fbe3b0">Middel</span>
<span class="c" style="left:290.2px;letter-spacing:.28px">Middel</span>
<span class="c" style="left:350px;letter-spacing:.28px">Middel</span>
<span class="ex c"></span>
<span class="lk" style="left:525px"><svg width="10" height="11"><path d="M.5 5.6V1.9A1.1 1.1 0 0 1 1.6.8H7.4A1.1 1.1 0 0 1 8.5 1.9V8.7A1.1 1.1 0 0 1 7.4 9.8H3.9" fill="rgba(255,255,255,.3)" stroke="#6e9dd6" stroke-width=".95"/><path d="M2.1 8.6C2.3 6.7 3.3 5.6 5 5" stroke="#6a6a6a" stroke-width="1.4" fill="none"/><path d="M3.6 2.9h3.3v3.3z" fill="#606060"/><path d="M.5 7.4v1.7c0 .9 1.8 .9 1.8 0V8.3" stroke="#8e8e8e" stroke-width=".8" fill="none"/></svg></span><span class="lk" style="left:585px"><svg width="10" height="11"><path d="M.5 5.6V1.9A1.1 1.1 0 0 1 1.6.8H7.4A1.1 1.1 0 0 1 8.5 1.9V8.7A1.1 1.1 0 0 1 7.4 9.8H3.9" fill="rgba(255,255,255,.3)" stroke="#6e9dd6" stroke-width=".95"/><path d="M2.1 8.6C2.3 6.7 3.3 5.6 5 5" stroke="#6a6a6a" stroke-width="1.4" fill="none"/><path d="M3.6 2.9h3.3v3.3z" fill="#606060"/><path d="M.5 7.4v1.7c0 .9 1.8 .9 1.8 0V8.3" stroke="#8e8e8e" stroke-width=".8" fill="none"/></svg></span>
<span class="c" style="left:620px;width:60px;text-align:center">Dec-17</span>
<span class="wn"><svg width="11" height="12"><path d="M5.5 1.4C6.2 1.4 6.5 1.8 6.9 2.5L9.7 9C10.1 10 9.7 10.6 8.8 10.6H2.2C1.3 10.6 .9 10 1.3 9L4.1 2.5C4.5 1.8 4.8 1.4 5.5 1.4Z" fill="url(#wg)" stroke="#d8b541" stroke-width=".7"/><path d="M4.85 4h1.3l-.25 3.5h-.8z" fill="#10101c"/><rect x="4.9" y="8.1" width="1.2" height="1.2" rx=".4" fill="#3a3420"/></svg></span>
<span class="ph c" style="background:#629343;color:#111;letter-spacing:0.25px">Afronding</span>
<span class="c" style="left:804px">Groot</span>
<span class="d dG" style="left:873.8px"></span>
<span class="d dG" style="left:934.8px"></span>
<span class="d dG" style="left:995.8px"></span>
<span class="d dY" style="left:1056.8px"></span>
<span class="g" style="left:1092px;width:271px;background:#82b864"></span>
<span class="g" style="left:1363px;width:120px;background:#629343"></span>
</div>
<div id="rs" class="a"></div><div id="rstop" class="a"></div><div id="rsthumb" class="a"></div>
<svg class="a" style="left:1551px;top:176px" width="14" height="29" viewBox="0 0 14 29"><path d="M1.8 2.6h10" stroke="#6c6c6c" stroke-width="2.2"/><path d="M1.8 11.2 6.8 5.8l5 5.4" stroke="#6c6c6c" stroke-width="2.5" fill="none"/><path d="M1 14.5h12" stroke="#ccc" stroke-width=".6" stroke-dasharray="1 1"/><path d="M1.8 24 6.8 18.4l5 5.6" stroke="#6c6c6c" stroke-width="2.5" fill="none"/></svg>
<svg class="a" style="left:1551px;top:896px" width="14" height="29" viewBox="0 0 14 29"><path d="M1.8 4 6.8 9.8l5-5.8" stroke="#6c6c6c" stroke-width="2.5" fill="none"/><path d="M1 13.8h12" stroke="#ccc" stroke-width=".6" stroke-dasharray="1 1"/><path d="M1.8 16.5 6.8 22.2l5-5.7" stroke="#6c6c6c" stroke-width="2.5" fill="none"/><path d="M1.8 25.5h10" stroke="#6c6c6c" stroke-width="2.2"/></svg>
<div id="ovl" class="a"></div>
<div class="mh m" id="m0" style="top:57.9px;color:#3ea5de;letter-spacing:0.629px">Projectplanning</div>
<div class="mi m" id="m1" style="top:84.75px;color:#3ea5de;letter-spacing:0.437px">Mijn Beschikbaarheid</div>
<div class="mi m" id="m2" style="top:108.25px;color:#3ea5de;letter-spacing:0.403px">Benodigde capaciteit</div>
<div class="mi m" id="m3" style="top:131.75px;color:#3ea5de;letter-spacing:0.406px">Beschikbaarheid</div>
<div class="mi m" id="m4" style="top:155.25px;color:#3ea5de;letter-spacing:0.446px">Mijn Planning</div>
<div class="mi m" id="m5" style="top:178.75px;color:#3ea5de;letter-spacing:0.391px">Planning Projectleider</div>
<div class="mi m" id="m6" style="top:202.25px;color:#3ea5de;letter-spacing:0.312px">Planning Resourcemanager</div>
<div class="mi m" id="m7" style="top:225.75px;color:#3ea5de;letter-spacing:0.399px">Planningsoverzicht</div>
<div class="mi m" id="m8" style="top:249.25px;color:#3ea5de;letter-spacing:0.484px">Roosterplanning</div>
<div class="mi m" id="m9" style="top:272.75px;color:#3ea5de;letter-spacing:0.545px">Urenregistratie</div>
<div class="mh m" id="m10" style="top:319.7px;color:#14b876;letter-spacing:0.692px">Sprintplanning</div>
<div class="mi m" id="m11" style="top:345.25px;color:#14b876;letter-spacing:0.461px">Huidige Sprint</div>
<div class="mi m" id="m12" style="top:368.75px;color:#14b876;letter-spacing:0.437px">Mijn Beschikbaarheid</div>
<div class="mi m" id="m13" style="top:392.25px;color:#14b876;letter-spacing:0.406px">Beschikbaarheid</div>
<div class="mi m" id="m14" style="top:415.75px;color:#14b876;letter-spacing:0.505px">Opvoer Taken</div>
<div class="mi m" id="m15" style="top:439.25px;color:#14b876;letter-spacing:0.395px">Sprint Planning</div>
<div class="mi m" id="m16" style="top:462.75px;color:#14b876;letter-spacing:0.489px">Sprint Dashboard</div>
<div class="mh m" id="m17" style="top:509.0px;color:#8d6cb3;letter-spacing:0.553px">Capaciteitplanning</div>
<div class="mi m" id="m18" style="top:535.15px;color:#8d6cb3;letter-spacing:0.403px">Benodigde capaciteit</div>
<div class="mi m" id="m19" style="top:558.65px;color:#8d6cb3;letter-spacing:0.406px">Beschikbaarheid</div>
<div class="mi m" id="m20" style="top:582.15px;color:#ffffff;font-weight:bold;font-style:italic;font-size:14.3px;-webkit-text-stroke:.35px #fff;letter-spacing:0.477px">Capaciteitplanning</div>
<div class="mh m" id="m21" style="top:628.2px;color:#3ea5de;letter-spacing:0.567px">Project Portfolio Management</div>
<div class="mi m" id="m22" style="top:654.25px;color:#3ea5de;letter-spacing:0.412px">Project Beoordeling</div>
<div class="mi m" id="m23" style="top:677.75px;color:#3ea5de;font-style:italic;letter-spacing:0.313px">Voortgangsrapportage</div>
<div class="mi m" id="m24" style="top:701.25px;color:#3ea5de;letter-spacing:0.336px">Project Board Agenda</div>
<div class="mi m" id="m25" style="top:724.75px;color:#3ea5de;letter-spacing:0.651px">Doelenmatrix</div>
<div class="mh m" id="m26" style="top:771.0px;color:#f48b3c;letter-spacing:0.311px">Rapportages</div>
<div class="mi m" id="m27" style="top:797.25px;color:#f48b3c;letter-spacing:0.424px">Project Dashboard</div>
<div class="mi m" id="m28" style="top:820.75px;color:#f48b3c;letter-spacing:0.461px">Voortgangsrapportage (historie)</div>
<div class="mi m" id="m29" style="top:844.25px;color:#f48b3c;letter-spacing:0.502px">Projectkaart</div>
<div class="mi m" id="m30" style="top:867.75px;color:#f48b3c;letter-spacing:0.257px">Financiële Rapportage</div>
<div class="mi m" id="m31" style="top:891.25px;color:#f48b3c;letter-spacing:0.213px">Planning Collega&#x27;s</div>
<div class="mi m" id="m32" style="top:914.75px;color:#f48b3c;letter-spacing:0.163px">Planning vs Realisatie</div>
<div id="sb" class="a"></div><div id="sbthumb" class="a"></div><div id="sbarrow" class="a"></div>
<div id="clp" class="a"><svg width="14" height="36" viewBox="0 0 14 36"><path d="M13.8 0.3 1.6 18 13.8 35.7" stroke="#fff" stroke-width="3" fill="none"/></svg></div>
</body></html>
